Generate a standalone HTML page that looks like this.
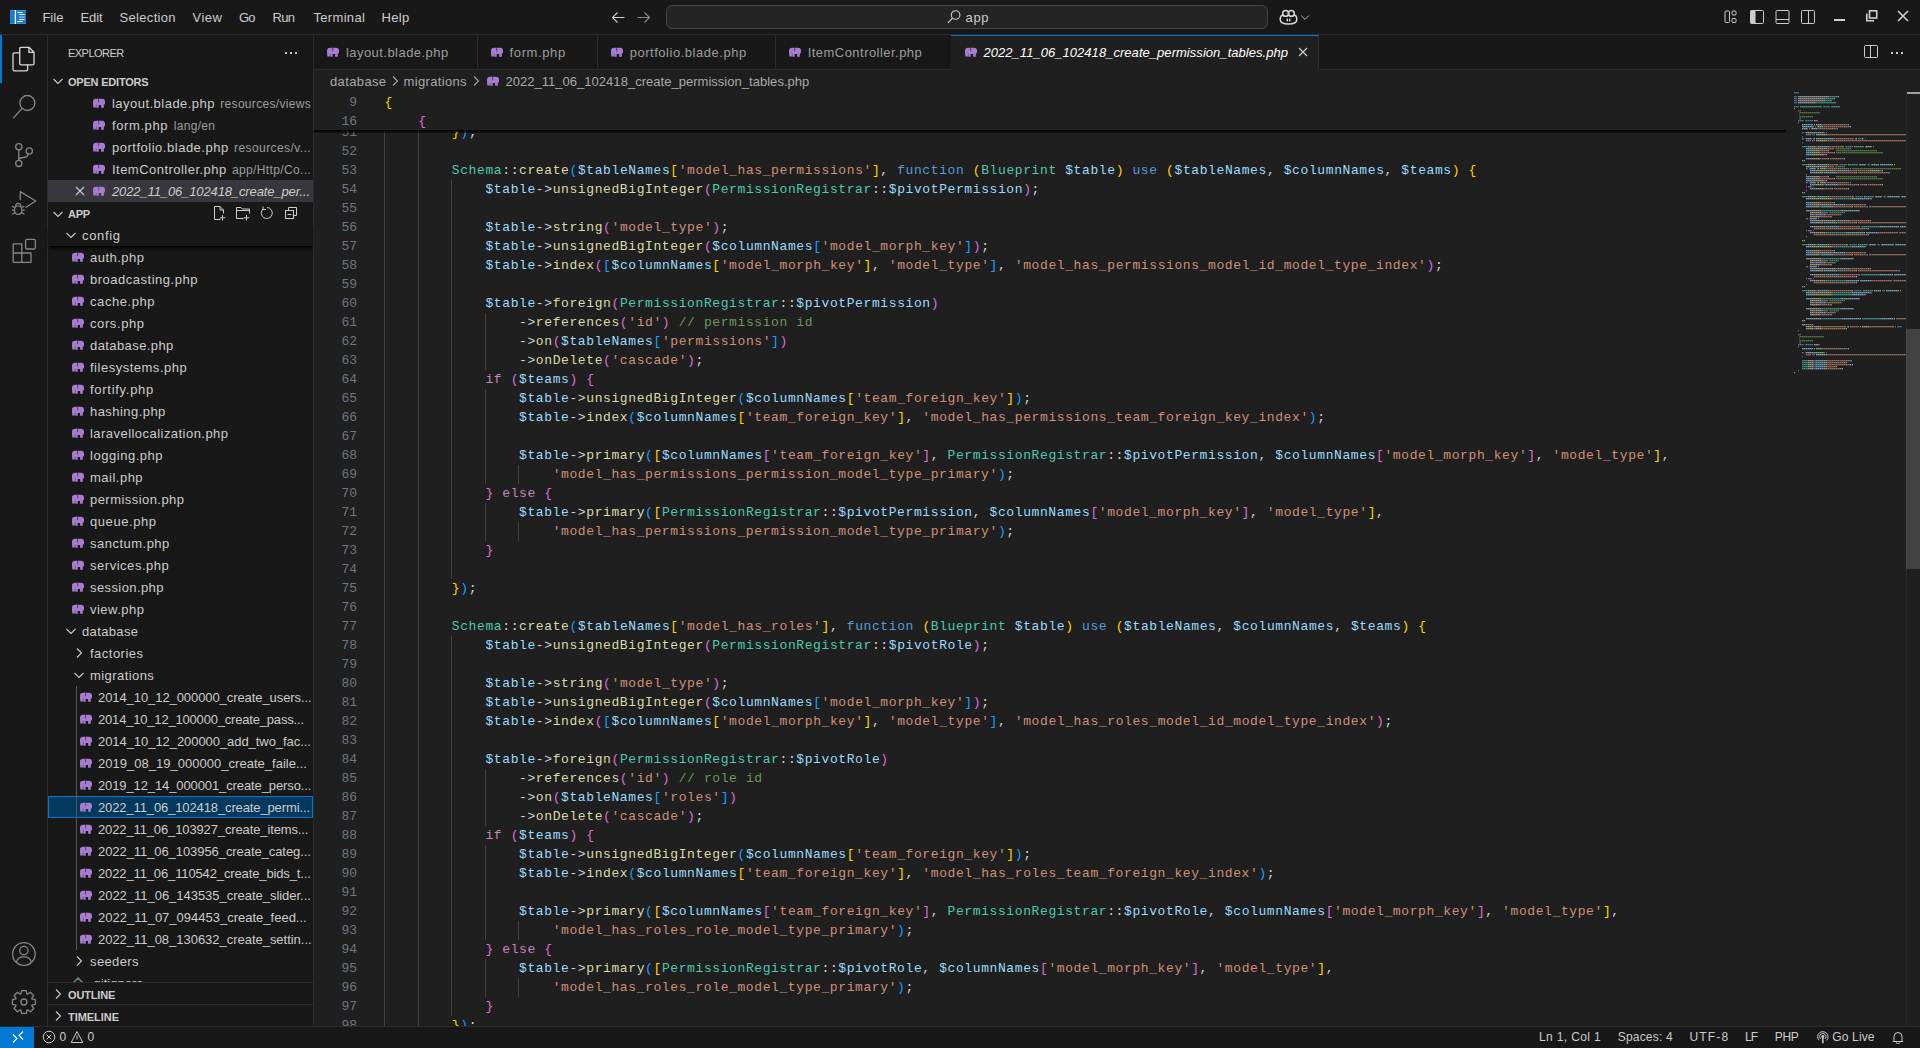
<!DOCTYPE html><html><head><meta charset="utf-8"><title>VS Code</title><style>
*{margin:0;padding:0;box-sizing:border-box}
html,body{width:1920px;height:1048px;overflow:hidden;background:#1F1F1F;font-family:"Liberation Sans",sans-serif;color:#CCCCCC}
.a{position:absolute}
.t{position:absolute;white-space:pre;font-size:13px;line-height:16px}
.ic{position:absolute}
.code{position:absolute;white-space:pre;font-family:"Liberation Mono",monospace;font-size:13px;letter-spacing:0.6px;line-height:19px;color:#D4D4D4}
.ln{position:absolute;white-space:pre;font-family:"Liberation Mono",monospace;font-size:13px;line-height:19px;color:#6E7681;text-align:right;width:60px}
.ig{position:absolute;width:1px;background:#404040}
</style></head><body>
<div class="a" style="left:0;top:0;width:1920px;height:35px;background:#181818;border-bottom:1px solid #2B2B2B"></div>
<svg class="ic" style="left:10px;top:10px" width="16" height="14" viewBox="0 0 16 14"><rect x="0" y="0" width="16" height="14" fill="#1B7CCC"/><rect x="0" y="0" width="16" height="0.8" fill="#3E93DA"/><rect x="0" y="13.2" width="16" height="0.8" fill="#3E93DA"/><rect x="4.8" y="0" width="1.2" height="14" fill="#F4F8FC"/><rect x="7.1" y="2" width="5.7" height="1.1" rx="0.5" fill="#EEF4FA"/><rect x="9" y="4" width="5.7" height="1.1" rx="0.5" fill="#EEF4FA"/><rect x="9" y="6.4" width="5.7" height="1.3" fill="#8FC0E8"/><rect x="9" y="8.9" width="5.7" height="1.1" rx="0.5" fill="#EEF4FA"/><rect x="7.1" y="11" width="5.7" height="1.1" rx="0.5" fill="#EEF4FA"/></svg>
<div class="t" style="left:42.4px;top:10px;font-size:13px;color:#CCCCCC;font-weight:normal;font-style:normal;letter-spacing:0.018px;">File</div>
<div class="t" style="left:80.5px;top:10px;font-size:13px;color:#CCCCCC;font-weight:normal;font-style:normal;letter-spacing:-0.067px;">Edit</div>
<div class="t" style="left:119.6px;top:10px;font-size:13px;color:#CCCCCC;font-weight:normal;font-style:normal;letter-spacing:0.303px;">Selection</div>
<div class="t" style="left:192.5px;top:10px;font-size:13px;color:#CCCCCC;font-weight:normal;font-style:normal;letter-spacing:0.486px;">View</div>
<div class="t" style="left:238.9px;top:10px;font-size:13px;color:#CCCCCC;font-weight:normal;font-style:normal;letter-spacing:-0.642px;">Go</div>
<div class="t" style="left:272.5px;top:10px;font-size:13px;color:#CCCCCC;font-weight:normal;font-style:normal;letter-spacing:-0.624px;">Run</div>
<div class="t" style="left:313.4px;top:10px;font-size:13px;color:#CCCCCC;font-weight:normal;font-style:normal;letter-spacing:0.339px;">Terminal</div>
<div class="t" style="left:381.6px;top:10px;font-size:13px;color:#CCCCCC;font-weight:normal;font-style:normal;letter-spacing:0.288px;">Help</div>
<svg class="ic" style="left:610px;top:10px" width="16" height="16" viewBox="0 0 16 16"><path d="M14.5 7.5 H2.5 M7.5 2.5 L2.5 7.5 L7.5 12.5" fill="none" stroke="#CCCCCC" stroke-width="1.1"/></svg>
<svg class="ic" style="left:636px;top:10px" width="16" height="16" viewBox="0 0 16 16"><path d="M1.5 7.5 H13.5 M8.5 2.5 L13.5 7.5 L8.5 12.5" fill="none" stroke="#8B8B8B" stroke-width="1.1"/></svg>
<div class="a" style="left:666px;top:5px;width:602px;height:24px;background:#242424;border:1px solid #454545;border-radius:6px"></div>
<svg class="ic" style="left:947px;top:10px" width="14" height="14" viewBox="0 0 14 14"><circle cx="8.6" cy="5" r="4.3" fill="none" stroke="#C8C8C8" stroke-width="1.1"/><path d="M5.6 8 L1 12.8" stroke="#C8C8C8" stroke-width="1.2"/></svg>
<div class="t" style="left:965.5px;top:10px;font-size:13px;color:#CCCCCC;font-weight:normal;font-style:normal;letter-spacing:0.655px;">app</div>
<svg class="ic" style="left:1279px;top:9px" width="19" height="16" viewBox="0 0 19 16"><path d="M1.2 10.5 C1.2 7 3 6 4.6 6 H14.4 C16 6 17.8 7 17.8 10.5 C17.8 14 14 15 9.5 15 C5 15 1.2 14 1.2 10.5 Z" fill="none" stroke="#D8D8D8" stroke-width="1.5"/><circle cx="6.6" cy="4.4" r="2.9" fill="#181818" stroke="#D8D8D8" stroke-width="1.5"/><circle cx="12.4" cy="4.4" r="2.9" fill="#181818" stroke="#D8D8D8" stroke-width="1.5"/><rect x="7.6" y="9.6" width="1.4" height="2.8" fill="#D8D8D8"/><rect x="10" y="9.6" width="1.4" height="2.8" fill="#D8D8D8"/></svg>
<svg class="ic" style="left:1299px;top:11px" width="12" height="12" viewBox="0 0 12 12"><path d="M2.2 4.6 L6 8.4 L9.8 4.6" fill="none" stroke="#BBBBBB" stroke-width="1"/></svg>
<svg class="ic" style="left:1724px;top:10px" width="16" height="16" viewBox="0 0 16 16"><rect x="1" y="1" width="4.5" height="11.5" rx="1" fill="none" stroke="#CCCCCC"/><rect x="8" y="1" width="4" height="4" rx="1" fill="none" stroke="#CCCCCC"/><rect x="8" y="8.5" width="4" height="4" rx="1" fill="none" stroke="#CCCCCC"/></svg>
<svg class="ic" style="left:1749px;top:10px" width="16" height="16" viewBox="0 0 16 16"><rect x="1.5" y="0.5" width="13" height="13" rx="1" fill="none" stroke="#CCCCCC"/><rect x="1.5" y="0.5" width="5" height="13" fill="#CCCCCC"/></svg>
<svg class="ic" style="left:1775px;top:10px" width="16" height="16" viewBox="0 0 16 16"><rect x="1" y="0.5" width="13" height="13" rx="1" fill="none" stroke="#CCCCCC"/><path d="M1 9.5 H14" stroke="#CCCCCC"/></svg>
<svg class="ic" style="left:1801px;top:10px" width="16" height="16" viewBox="0 0 16 16"><rect x="0.5" y="0.5" width="13" height="13" rx="1" fill="none" stroke="#CCCCCC"/><path d="M7.5 0.5 V13.5" stroke="#CCCCCC"/></svg>
<div class="a" style="left:1834px;top:19px;width:11px;height:2px;background:#D0D0D0"></div>
<svg class="ic" style="left:1866px;top:10px" width="12" height="12" viewBox="0 0 12 12"><rect x="3.5" y="0.8" width="7.2" height="7.2" fill="none" stroke="#D0D0D0" stroke-width="1.6"/><path d="M0.8 3.5 V10.8 H8" fill="none" stroke="#D0D0D0" stroke-width="1.6"/></svg>
<svg class="ic" style="left:1897px;top:10px" width="12" height="12" viewBox="0 0 12 12"><path d="M1 1 L11 11 M11 1 L1 11" stroke="#D0D0D0" stroke-width="1.6"/></svg>
<div class="a" style="left:0;top:35px;width:48px;height:991px;background:#181818;border-right:1px solid #2B2B2B"></div>
<div class="a" style="left:0;top:35px;width:2px;height:48px;background:#0078D4"></div>
<svg class="ic" style="left:0;top:35px" width="48" height="48" viewBox="0 0 48 48"><path d="M21 12.3 H29 L34 17.3 V28.6 Q34 29.9 32.7 29.9 H21 Q19.7 29.9 19.7 28.6 V13.6 Q19.7 12.3 21 12.3 Z M28.9 12.4 V17.4 H33.9" stroke="#D7D7D7" stroke-width="1.3" fill="none" stroke-linejoin="round" stroke-linecap="round"/><path d="M19.7 17.9 H14.3 Q13 17.9 13 19.2 V34.6 Q13 35.9 14.3 35.9 H26.3 Q27.6 35.9 27.6 34.6 V29.9" stroke="#D7D7D7" stroke-width="1.3" fill="none" stroke-linejoin="round" stroke-linecap="round"/></svg>
<svg class="ic" style="left:0;top:83px" width="48" height="48" viewBox="0 0 48 48"><circle cx="27.4" cy="20" r="7.5" stroke="#868686" stroke-width="1.3" fill="none" stroke-linejoin="round" stroke-linecap="round"/><path d="M22 25.6 L13.6 34.8" stroke="#868686" stroke-width="1.3" fill="none" stroke-linejoin="round" stroke-linecap="round"/></svg>
<svg class="ic" style="left:0;top:131px" width="48" height="48" viewBox="0 0 48 48"><circle cx="18.8" cy="15.7" r="3.1" stroke="#868686" stroke-width="1.3" fill="none" stroke-linejoin="round" stroke-linecap="round"/><circle cx="18.8" cy="32.4" r="3.1" stroke="#868686" stroke-width="1.3" fill="none" stroke-linejoin="round" stroke-linecap="round"/><circle cx="29.3" cy="20" r="3.1" stroke="#868686" stroke-width="1.3" fill="none" stroke-linejoin="round" stroke-linecap="round"/><path d="M18.8 18.8 V29.3 M28.3 23 Q27.2 26.4 23.5 26.5 Q19.4 26.6 18.8 29" stroke="#868686" stroke-width="1.3" fill="none" stroke-linejoin="round" stroke-linecap="round"/></svg>
<svg class="ic" style="left:0;top:179px" width="48" height="48" viewBox="0 0 48 48"><path d="M20.3 20.5 V12.6 L35.8 22 L26 28.3" stroke="#868686" stroke-width="1.3" fill="none" stroke-linejoin="round" stroke-linecap="round"/><path d="M15.6 27.2 Q15.8 24.4 18.2 24.4 Q20.6 24.4 20.8 27.2 M14.5 31 Q14.5 27 18.2 27 Q21.9 27 21.9 31 Q21.9 35.4 18.2 35.4 Q14.5 35.4 14.5 31 Z M12.4 27.4 L14.8 28.6 M12.2 31.2 H14.5 M12.4 35 L14.9 33.6 M24 27.4 L21.6 28.6 M24.2 31.2 H21.9 M24 35 L21.5 33.6" stroke="#868686" stroke-width="1.2" fill="none" stroke-linecap="round"/></svg>
<svg class="ic" style="left:0;top:227px" width="48" height="48" viewBox="0 0 48 48"><path d="M13.2 16.8 H21.8 V26 H31 V35.4 H13.2 Z M13.2 26 H21.8 V35.4" stroke="#868686" stroke-width="1.3" fill="none" stroke-linejoin="round" stroke-linecap="round"/><rect x="25.6" y="12.4" width="9.8" height="9.6" rx="1.6" stroke="#868686" stroke-width="1.3" fill="none" stroke-linejoin="round" stroke-linecap="round"/></svg>
<svg class="ic" style="left:0;top:930px" width="48" height="48" viewBox="0 0 48 48"><circle cx="23.9" cy="24" r="11.3" stroke="#868686" stroke-width="1.3" fill="none" stroke-linejoin="round" stroke-linecap="round"/><circle cx="23.9" cy="20.6" r="4.2" stroke="#868686" stroke-width="1.3" fill="none" stroke-linejoin="round" stroke-linecap="round"/><path d="M16.4 32.2 Q17.6 26.8 23.9 26.8 Q30.2 26.8 31.4 32.2" stroke="#868686" stroke-width="1.3" fill="none" stroke-linejoin="round" stroke-linecap="round"/></svg>
<svg class="ic" style="left:0;top:976px" width="48" height="48" viewBox="0 0 48 48"><polygon points="20.87,17.95 21.58,14.53 26.22,14.53 26.93,17.95 27.45,18.17 30.36,16.25 33.65,19.54 31.73,22.45 31.95,22.97 35.37,23.68 35.37,28.32 31.95,29.03 31.73,29.55 33.65,32.46 30.36,35.75 27.45,33.83 26.93,34.05 26.22,37.47 21.58,37.47 20.87,34.05 20.35,33.83 17.44,35.75 14.15,32.46 16.07,29.55 15.85,29.03 12.43,28.32 12.43,23.68 15.85,22.97 16.07,22.45 14.15,19.54 17.44,16.25 20.35,18.17" stroke="#868686" stroke-width="1.3" fill="none" stroke-linejoin="round" stroke-linecap="round"/><circle cx="23.9" cy="26" r="3" stroke="#868686" stroke-width="1.3" fill="none" stroke-linejoin="round" stroke-linecap="round"/></svg>
<div class="a" style="left:48px;top:35px;width:266px;height:991px;background:#181818;border-right:1px solid #2B2B2B"></div>
<div class="t" style="left:68px;top:44.5px;font-size:11px;color:#CCCCCC;font-weight:normal;font-style:normal;letter-spacing:-0.530px;">EXPLORER</div>
<div class="a" style="left:285px;top:52px;width:2px;height:2px;background:#CCCCCC;box-shadow:5px 0 #CCCCCC,10px 0 #CCCCCC"></div>
<svg class="ic" style="left:50px;top:73px" width="16" height="16" viewBox="0 0 16 16"><path d="M3.5 6 L8 10.5 L12.5 6" fill="none" stroke="#CCCCCC" stroke-width="1.1"/></svg>
<div class="t" style="left:68px;top:73.5px;font-size:11px;color:#CCCCCC;font-weight:bold;font-style:normal;letter-spacing:-0.202px;">OPEN EDITORS</div>
<svg class="ic" style="left:93px;top:98px" width="13" height="11" viewBox="0 0 13 11"><g transform="translate(0,0.8)"><path fill="#A77DD1" d="M0 3.2Q0 0 3 0L9 0Q12 0 12 3L12 4.4Q12 5.4 10.8 5.9L10.8 9L8.1 9L8.1 6.2L5.7 6.2L5.7 9L3.3 9L3.3 5.6L2.9 5.6L2.9 8.8L1 8.8Q0.2 8.8 0.2 7.6Z"/><path d="M5.7 0 V3.6" stroke="#181818" stroke-width="0.6"/></g></svg>
<div class="t" style="left:112px;top:96px;font-size:13px;color:#CCCCCC;font-weight:normal;font-style:normal;letter-spacing:0.473px;">layout.blade.php</div>
<div class="t" style="left:220.25px;top:96px;font-size:12px;color:#9D9D9D;font-weight:normal;font-style:normal;letter-spacing:0.319px;">resources/views</div>
<svg class="ic" style="left:93px;top:120px" width="13" height="11" viewBox="0 0 13 11"><g transform="translate(0,0.8)"><path fill="#A77DD1" d="M0 3.2Q0 0 3 0L9 0Q12 0 12 3L12 4.4Q12 5.4 10.8 5.9L10.8 9L8.1 9L8.1 6.2L5.7 6.2L5.7 9L3.3 9L3.3 5.6L2.9 5.6L2.9 8.8L1 8.8Q0.2 8.8 0.2 7.6Z"/><path d="M5.7 0 V3.6" stroke="#181818" stroke-width="0.6"/></g></svg>
<div class="t" style="left:112px;top:118px;font-size:13px;color:#CCCCCC;font-weight:normal;font-style:normal;letter-spacing:0.600px;">form.php</div>
<div class="t" style="left:173.75px;top:118px;font-size:12px;color:#9D9D9D;font-weight:normal;font-style:normal;letter-spacing:0.305px;">lang/en</div>
<svg class="ic" style="left:93px;top:142px" width="13" height="11" viewBox="0 0 13 11"><g transform="translate(0,0.8)"><path fill="#A77DD1" d="M0 3.2Q0 0 3 0L9 0Q12 0 12 3L12 4.4Q12 5.4 10.8 5.9L10.8 9L8.1 9L8.1 6.2L5.7 6.2L5.7 9L3.3 9L3.3 5.6L2.9 5.6L2.9 8.8L1 8.8Q0.2 8.8 0.2 7.6Z"/><path d="M5.7 0 V3.6" stroke="#181818" stroke-width="0.6"/></g></svg>
<div class="t" style="left:112px;top:140px;font-size:13px;color:#CCCCCC;font-weight:normal;font-style:normal;letter-spacing:0.513px;">portfolio.blade.php</div>
<div class="t" style="left:234.0px;top:140px;font-size:12px;color:#9D9D9D;font-weight:normal;font-style:normal;letter-spacing:0.428px;">resources/v...</div>
<svg class="ic" style="left:93px;top:164px" width="13" height="11" viewBox="0 0 13 11"><g transform="translate(0,0.8)"><path fill="#A77DD1" d="M0 3.2Q0 0 3 0L9 0Q12 0 12 3L12 4.4Q12 5.4 10.8 5.9L10.8 9L8.1 9L8.1 6.2L5.7 6.2L5.7 9L3.3 9L3.3 5.6L2.9 5.6L2.9 8.8L1 8.8Q0.2 8.8 0.2 7.6Z"/><path d="M5.7 0 V3.6" stroke="#181818" stroke-width="0.6"/></g></svg>
<div class="t" style="left:112px;top:162px;font-size:13px;color:#CCCCCC;font-weight:normal;font-style:normal;letter-spacing:0.469px;">ItemController.php</div>
<div class="t" style="left:232.0px;top:162px;font-size:12px;color:#9D9D9D;font-weight:normal;font-style:normal;letter-spacing:0.359px;">app/Http/Co...</div>
<div class="a" style="left:48px;top:180px;width:265px;height:22px;background:#37373D"></div>
<svg class="ic" style="left:74px;top:185px" width="12" height="12" viewBox="0 0 12 12"><path d="M2 2 L10 10 M10 2 L2 10" stroke="#CCCCCC" stroke-width="1.1"/></svg>
<svg class="ic" style="left:93px;top:186px" width="13" height="11" viewBox="0 0 13 11"><g transform="translate(0,0.8)"><path fill="#A77DD1" d="M0 3.2Q0 0 3 0L9 0Q12 0 12 3L12 4.4Q12 5.4 10.8 5.9L10.8 9L8.1 9L8.1 6.2L5.7 6.2L5.7 9L3.3 9L3.3 5.6L2.9 5.6L2.9 8.8L1 8.8Q0.2 8.8 0.2 7.6Z"/><path d="M5.7 0 V3.6" stroke="#37373D" stroke-width="0.6"/></g></svg>
<div class="t" style="left:112px;top:184px;font-size:13px;color:#CCCCCC;font-weight:normal;font-style:italic;letter-spacing:-0.123px;">2022_11_06_102418_create_per...</div>
<svg class="ic" style="left:50px;top:206px" width="16" height="16" viewBox="0 0 16 16"><path d="M3.5 6 L8 10.5 L12.5 6" fill="none" stroke="#CCCCCC" stroke-width="1.1"/></svg>
<div class="t" style="left:68px;top:206px;font-size:11px;color:#CCCCCC;font-weight:bold;font-style:normal;letter-spacing:-0.309px;">APP</div>
<svg class="ic" style="left:211px;top:205px" width="16" height="16" viewBox="0 0 16 16"><path d="M9.5 14.5 H3.5 V1.5 H9 L12.5 5 V8.5 M9 1.5 V5 H12.5 M11.5 10 V15.5 M8.7 12.8 H14.3" fill="none" stroke="#CCCCCC" stroke-width="1"/></svg>
<svg class="ic" style="left:235px;top:205px" width="16" height="16" viewBox="0 0 16 16"><path d="M8.5 13.5 H1.5 V2.5 H6 L7.5 4 H14.5 V8.5 M1.5 5.5 H14.5 M11.5 10 V15.5 M8.7 12.8 H14.3" fill="none" stroke="#CCCCCC" stroke-width="1"/></svg>
<svg class="ic" style="left:259px;top:205px" width="16" height="16" viewBox="0 0 16 16"><path d="M4 4 A5.5 5.5 0 1 0 8 2.5 M4 1.5 V4.5 H7" fill="none" stroke="#CCCCCC" stroke-width="1"/></svg>
<svg class="ic" style="left:283px;top:205px" width="16" height="16" viewBox="0 0 16 16"><rect x="2.5" y="5.5" width="8" height="8" fill="none" stroke="#CCCCCC"/><path d="M5.5 5.5 V2.5 H13.5 V10.5 H10.5 M4.5 9.5 H8.5" fill="none" stroke="#CCCCCC"/></svg>
<div class="a" style="left:48px;top:224px;width:265px;height:758px;overflow:hidden">
<svg class="ic" style="left:24px;top:28px" width="13" height="11" viewBox="0 0 13 11"><g transform="translate(0,0.8)"><path fill="#A77DD1" d="M0 3.2Q0 0 3 0L9 0Q12 0 12 3L12 4.4Q12 5.4 10.8 5.9L10.8 9L8.1 9L8.1 6.2L5.7 6.2L5.7 9L3.3 9L3.3 5.6L2.9 5.6L2.9 8.8L1 8.8Q0.2 8.8 0.2 7.6Z"/><path d="M5.7 0 V3.6" stroke="#181818" stroke-width="0.6"/></g></svg>
<div class="t" style="left:42px;top:26px;font-size:13px;color:#CCCCCC;font-weight:normal;font-style:normal;letter-spacing:0.485px;">auth.php</div>
<svg class="ic" style="left:24px;top:50px" width="13" height="11" viewBox="0 0 13 11"><g transform="translate(0,0.8)"><path fill="#A77DD1" d="M0 3.2Q0 0 3 0L9 0Q12 0 12 3L12 4.4Q12 5.4 10.8 5.9L10.8 9L8.1 9L8.1 6.2L5.7 6.2L5.7 9L3.3 9L3.3 5.6L2.9 5.6L2.9 8.8L1 8.8Q0.2 8.8 0.2 7.6Z"/><path d="M5.7 0 V3.6" stroke="#181818" stroke-width="0.6"/></g></svg>
<div class="t" style="left:42px;top:48px;font-size:13px;color:#CCCCCC;font-weight:normal;font-style:normal;letter-spacing:0.511px;">broadcasting.php</div>
<svg class="ic" style="left:24px;top:72px" width="13" height="11" viewBox="0 0 13 11"><g transform="translate(0,0.8)"><path fill="#A77DD1" d="M0 3.2Q0 0 3 0L9 0Q12 0 12 3L12 4.4Q12 5.4 10.8 5.9L10.8 9L8.1 9L8.1 6.2L5.7 6.2L5.7 9L3.3 9L3.3 5.6L2.9 5.6L2.9 8.8L1 8.8Q0.2 8.8 0.2 7.6Z"/><path d="M5.7 0 V3.6" stroke="#181818" stroke-width="0.6"/></g></svg>
<div class="t" style="left:42px;top:70px;font-size:13px;color:#CCCCCC;font-weight:normal;font-style:normal;letter-spacing:0.576px;">cache.php</div>
<svg class="ic" style="left:24px;top:94px" width="13" height="11" viewBox="0 0 13 11"><g transform="translate(0,0.8)"><path fill="#A77DD1" d="M0 3.2Q0 0 3 0L9 0Q12 0 12 3L12 4.4Q12 5.4 10.8 5.9L10.8 9L8.1 9L8.1 6.2L5.7 6.2L5.7 9L3.3 9L3.3 5.6L2.9 5.6L2.9 8.8L1 8.8Q0.2 8.8 0.2 7.6Z"/><path d="M5.7 0 V3.6" stroke="#181818" stroke-width="0.6"/></g></svg>
<div class="t" style="left:42px;top:92px;font-size:13px;color:#CCCCCC;font-weight:normal;font-style:normal;letter-spacing:0.591px;">cors.php</div>
<svg class="ic" style="left:24px;top:116px" width="13" height="11" viewBox="0 0 13 11"><g transform="translate(0,0.8)"><path fill="#A77DD1" d="M0 3.2Q0 0 3 0L9 0Q12 0 12 3L12 4.4Q12 5.4 10.8 5.9L10.8 9L8.1 9L8.1 6.2L5.7 6.2L5.7 9L3.3 9L3.3 5.6L2.9 5.6L2.9 8.8L1 8.8Q0.2 8.8 0.2 7.6Z"/><path d="M5.7 0 V3.6" stroke="#181818" stroke-width="0.6"/></g></svg>
<div class="t" style="left:42px;top:114px;font-size:13px;color:#CCCCCC;font-weight:normal;font-style:normal;letter-spacing:0.410px;">database.php</div>
<svg class="ic" style="left:24px;top:138px" width="13" height="11" viewBox="0 0 13 11"><g transform="translate(0,0.8)"><path fill="#A77DD1" d="M0 3.2Q0 0 3 0L9 0Q12 0 12 3L12 4.4Q12 5.4 10.8 5.9L10.8 9L8.1 9L8.1 6.2L5.7 6.2L5.7 9L3.3 9L3.3 5.6L2.9 5.6L2.9 8.8L1 8.8Q0.2 8.8 0.2 7.6Z"/><path d="M5.7 0 V3.6" stroke="#181818" stroke-width="0.6"/></g></svg>
<div class="t" style="left:42px;top:136px;font-size:13px;color:#CCCCCC;font-weight:normal;font-style:normal;letter-spacing:0.508px;">filesystems.php</div>
<svg class="ic" style="left:24px;top:160px" width="13" height="11" viewBox="0 0 13 11"><g transform="translate(0,0.8)"><path fill="#A77DD1" d="M0 3.2Q0 0 3 0L9 0Q12 0 12 3L12 4.4Q12 5.4 10.8 5.9L10.8 9L8.1 9L8.1 6.2L5.7 6.2L5.7 9L3.3 9L3.3 5.6L2.9 5.6L2.9 8.8L1 8.8Q0.2 8.8 0.2 7.6Z"/><path d="M5.7 0 V3.6" stroke="#181818" stroke-width="0.6"/></g></svg>
<div class="t" style="left:42px;top:158px;font-size:13px;color:#CCCCCC;font-weight:normal;font-style:normal;letter-spacing:0.718px;">fortify.php</div>
<svg class="ic" style="left:24px;top:182px" width="13" height="11" viewBox="0 0 13 11"><g transform="translate(0,0.8)"><path fill="#A77DD1" d="M0 3.2Q0 0 3 0L9 0Q12 0 12 3L12 4.4Q12 5.4 10.8 5.9L10.8 9L8.1 9L8.1 6.2L5.7 6.2L5.7 9L3.3 9L3.3 5.6L2.9 5.6L2.9 8.8L1 8.8Q0.2 8.8 0.2 7.6Z"/><path d="M5.7 0 V3.6" stroke="#181818" stroke-width="0.6"/></g></svg>
<div class="t" style="left:42px;top:180px;font-size:13px;color:#CCCCCC;font-weight:normal;font-style:normal;letter-spacing:0.446px;">hashing.php</div>
<svg class="ic" style="left:24px;top:204px" width="13" height="11" viewBox="0 0 13 11"><g transform="translate(0,0.8)"><path fill="#A77DD1" d="M0 3.2Q0 0 3 0L9 0Q12 0 12 3L12 4.4Q12 5.4 10.8 5.9L10.8 9L8.1 9L8.1 6.2L5.7 6.2L5.7 9L3.3 9L3.3 5.6L2.9 5.6L2.9 8.8L1 8.8Q0.2 8.8 0.2 7.6Z"/><path d="M5.7 0 V3.6" stroke="#181818" stroke-width="0.6"/></g></svg>
<div class="t" style="left:42px;top:202px;font-size:13px;color:#CCCCCC;font-weight:normal;font-style:normal;letter-spacing:0.459px;">laravellocalization.php</div>
<svg class="ic" style="left:24px;top:226px" width="13" height="11" viewBox="0 0 13 11"><g transform="translate(0,0.8)"><path fill="#A77DD1" d="M0 3.2Q0 0 3 0L9 0Q12 0 12 3L12 4.4Q12 5.4 10.8 5.9L10.8 9L8.1 9L8.1 6.2L5.7 6.2L5.7 9L3.3 9L3.3 5.6L2.9 5.6L2.9 8.8L1 8.8Q0.2 8.8 0.2 7.6Z"/><path d="M5.7 0 V3.6" stroke="#181818" stroke-width="0.6"/></g></svg>
<div class="t" style="left:42px;top:224px;font-size:13px;color:#CCCCCC;font-weight:normal;font-style:normal;letter-spacing:0.537px;">logging.php</div>
<svg class="ic" style="left:24px;top:248px" width="13" height="11" viewBox="0 0 13 11"><g transform="translate(0,0.8)"><path fill="#A77DD1" d="M0 3.2Q0 0 3 0L9 0Q12 0 12 3L12 4.4Q12 5.4 10.8 5.9L10.8 9L8.1 9L8.1 6.2L5.7 6.2L5.7 9L3.3 9L3.3 5.6L2.9 5.6L2.9 8.8L1 8.8Q0.2 8.8 0.2 7.6Z"/><path d="M5.7 0 V3.6" stroke="#181818" stroke-width="0.6"/></g></svg>
<div class="t" style="left:42px;top:246px;font-size:13px;color:#CCCCCC;font-weight:normal;font-style:normal;letter-spacing:0.495px;">mail.php</div>
<svg class="ic" style="left:24px;top:270px" width="13" height="11" viewBox="0 0 13 11"><g transform="translate(0,0.8)"><path fill="#A77DD1" d="M0 3.2Q0 0 3 0L9 0Q12 0 12 3L12 4.4Q12 5.4 10.8 5.9L10.8 9L8.1 9L8.1 6.2L5.7 6.2L5.7 9L3.3 9L3.3 5.6L2.9 5.6L2.9 8.8L1 8.8Q0.2 8.8 0.2 7.6Z"/><path d="M5.7 0 V3.6" stroke="#181818" stroke-width="0.6"/></g></svg>
<div class="t" style="left:42px;top:268px;font-size:13px;color:#CCCCCC;font-weight:normal;font-style:normal;letter-spacing:0.450px;">permission.php</div>
<svg class="ic" style="left:24px;top:292px" width="13" height="11" viewBox="0 0 13 11"><g transform="translate(0,0.8)"><path fill="#A77DD1" d="M0 3.2Q0 0 3 0L9 0Q12 0 12 3L12 4.4Q12 5.4 10.8 5.9L10.8 9L8.1 9L8.1 6.2L5.7 6.2L5.7 9L3.3 9L3.3 5.6L2.9 5.6L2.9 8.8L1 8.8Q0.2 8.8 0.2 7.6Z"/><path d="M5.7 0 V3.6" stroke="#181818" stroke-width="0.6"/></g></svg>
<div class="t" style="left:42px;top:290px;font-size:13px;color:#CCCCCC;font-weight:normal;font-style:normal;letter-spacing:0.569px;">queue.php</div>
<svg class="ic" style="left:24px;top:314px" width="13" height="11" viewBox="0 0 13 11"><g transform="translate(0,0.8)"><path fill="#A77DD1" d="M0 3.2Q0 0 3 0L9 0Q12 0 12 3L12 4.4Q12 5.4 10.8 5.9L10.8 9L8.1 9L8.1 6.2L5.7 6.2L5.7 9L3.3 9L3.3 5.6L2.9 5.6L2.9 8.8L1 8.8Q0.2 8.8 0.2 7.6Z"/><path d="M5.7 0 V3.6" stroke="#181818" stroke-width="0.6"/></g></svg>
<div class="t" style="left:42px;top:312px;font-size:13px;color:#CCCCCC;font-weight:normal;font-style:normal;letter-spacing:0.487px;">sanctum.php</div>
<svg class="ic" style="left:24px;top:336px" width="13" height="11" viewBox="0 0 13 11"><g transform="translate(0,0.8)"><path fill="#A77DD1" d="M0 3.2Q0 0 3 0L9 0Q12 0 12 3L12 4.4Q12 5.4 10.8 5.9L10.8 9L8.1 9L8.1 6.2L5.7 6.2L5.7 9L3.3 9L3.3 5.6L2.9 5.6L2.9 8.8L1 8.8Q0.2 8.8 0.2 7.6Z"/><path d="M5.7 0 V3.6" stroke="#181818" stroke-width="0.6"/></g></svg>
<div class="t" style="left:42px;top:334px;font-size:13px;color:#CCCCCC;font-weight:normal;font-style:normal;letter-spacing:0.529px;">services.php</div>
<svg class="ic" style="left:24px;top:358px" width="13" height="11" viewBox="0 0 13 11"><g transform="translate(0,0.8)"><path fill="#A77DD1" d="M0 3.2Q0 0 3 0L9 0Q12 0 12 3L12 4.4Q12 5.4 10.8 5.9L10.8 9L8.1 9L8.1 6.2L5.7 6.2L5.7 9L3.3 9L3.3 5.6L2.9 5.6L2.9 8.8L1 8.8Q0.2 8.8 0.2 7.6Z"/><path d="M5.7 0 V3.6" stroke="#181818" stroke-width="0.6"/></g></svg>
<div class="t" style="left:42px;top:356px;font-size:13px;color:#CCCCCC;font-weight:normal;font-style:normal;letter-spacing:0.402px;">session.php</div>
<svg class="ic" style="left:24px;top:380px" width="13" height="11" viewBox="0 0 13 11"><g transform="translate(0,0.8)"><path fill="#A77DD1" d="M0 3.2Q0 0 3 0L9 0Q12 0 12 3L12 4.4Q12 5.4 10.8 5.9L10.8 9L8.1 9L8.1 6.2L5.7 6.2L5.7 9L3.3 9L3.3 5.6L2.9 5.6L2.9 8.8L1 8.8Q0.2 8.8 0.2 7.6Z"/><path d="M5.7 0 V3.6" stroke="#181818" stroke-width="0.6"/></g></svg>
<div class="t" style="left:42px;top:378px;font-size:13px;color:#CCCCCC;font-weight:normal;font-style:normal;letter-spacing:0.487px;">view.php</div>
<svg class="ic" style="left:15px;top:399px" width="16" height="16" viewBox="0 0 16 16"><path d="M3.5 6 L8 10.5 L12.5 6" fill="none" stroke="#CCCCCC" stroke-width="1.1"/></svg>
<div class="t" style="left:34px;top:400px;font-size:13px;color:#CCCCCC;font-weight:normal;font-style:normal;letter-spacing:0.358px;">database</div>
<svg class="ic" style="left:23px;top:421px" width="16" height="16" viewBox="0 0 16 16"><path d="M6 3.5 L10.5 8 L6 12.5" fill="none" stroke="#CCCCCC" stroke-width="1.1"/></svg>
<div class="t" style="left:42px;top:422px;font-size:13px;color:#CCCCCC;font-weight:normal;font-style:normal;letter-spacing:0.484px;">factories</div>
<svg class="ic" style="left:23px;top:443px" width="16" height="16" viewBox="0 0 16 16"><path d="M3.5 6 L8 10.5 L12.5 6" fill="none" stroke="#CCCCCC" stroke-width="1.1"/></svg>
<div class="t" style="left:42px;top:444px;font-size:13px;color:#CCCCCC;font-weight:normal;font-style:normal;letter-spacing:0.426px;">migrations</div>
<svg class="ic" style="left:32px;top:468px" width="13" height="11" viewBox="0 0 13 11"><g transform="translate(0,0.8)"><path fill="#A77DD1" d="M0 3.2Q0 0 3 0L9 0Q12 0 12 3L12 4.4Q12 5.4 10.8 5.9L10.8 9L8.1 9L8.1 6.2L5.7 6.2L5.7 9L3.3 9L3.3 5.6L2.9 5.6L2.9 8.8L1 8.8Q0.2 8.8 0.2 7.6Z"/><path d="M5.7 0 V3.6" stroke="#181818" stroke-width="0.6"/></g></svg>
<div class="t" style="left:50px;top:466px;font-size:13px;color:#CCCCCC;font-weight:normal;font-style:normal;letter-spacing:-0.076px;">2014_10_12_000000_create_users...</div>
<svg class="ic" style="left:32px;top:490px" width="13" height="11" viewBox="0 0 13 11"><g transform="translate(0,0.8)"><path fill="#A77DD1" d="M0 3.2Q0 0 3 0L9 0Q12 0 12 3L12 4.4Q12 5.4 10.8 5.9L10.8 9L8.1 9L8.1 6.2L5.7 6.2L5.7 9L3.3 9L3.3 5.6L2.9 5.6L2.9 8.8L1 8.8Q0.2 8.8 0.2 7.6Z"/><path d="M5.7 0 V3.6" stroke="#181818" stroke-width="0.6"/></g></svg>
<div class="t" style="left:50px;top:488px;font-size:13px;color:#CCCCCC;font-weight:normal;font-style:normal;letter-spacing:-0.187px;">2014_10_12_100000_create_pass...</div>
<svg class="ic" style="left:32px;top:512px" width="13" height="11" viewBox="0 0 13 11"><g transform="translate(0,0.8)"><path fill="#A77DD1" d="M0 3.2Q0 0 3 0L9 0Q12 0 12 3L12 4.4Q12 5.4 10.8 5.9L10.8 9L8.1 9L8.1 6.2L5.7 6.2L5.7 9L3.3 9L3.3 5.6L2.9 5.6L2.9 8.8L1 8.8Q0.2 8.8 0.2 7.6Z"/><path d="M5.7 0 V3.6" stroke="#181818" stroke-width="0.6"/></g></svg>
<div class="t" style="left:50px;top:510px;font-size:13px;color:#CCCCCC;font-weight:normal;font-style:normal;letter-spacing:-0.058px;">2014_10_12_200000_add_two_fac...</div>
<svg class="ic" style="left:32px;top:534px" width="13" height="11" viewBox="0 0 13 11"><g transform="translate(0,0.8)"><path fill="#A77DD1" d="M0 3.2Q0 0 3 0L9 0Q12 0 12 3L12 4.4Q12 5.4 10.8 5.9L10.8 9L8.1 9L8.1 6.2L5.7 6.2L5.7 9L3.3 9L3.3 5.6L2.9 5.6L2.9 8.8L1 8.8Q0.2 8.8 0.2 7.6Z"/><path d="M5.7 0 V3.6" stroke="#181818" stroke-width="0.6"/></g></svg>
<div class="t" style="left:50px;top:532px;font-size:13px;color:#CCCCCC;font-weight:normal;font-style:normal;letter-spacing:0.022px;">2019_08_19_000000_create_faile...</div>
<svg class="ic" style="left:32px;top:556px" width="13" height="11" viewBox="0 0 13 11"><g transform="translate(0,0.8)"><path fill="#A77DD1" d="M0 3.2Q0 0 3 0L9 0Q12 0 12 3L12 4.4Q12 5.4 10.8 5.9L10.8 9L8.1 9L8.1 6.2L5.7 6.2L5.7 9L3.3 9L3.3 5.6L2.9 5.6L2.9 8.8L1 8.8Q0.2 8.8 0.2 7.6Z"/><path d="M5.7 0 V3.6" stroke="#181818" stroke-width="0.6"/></g></svg>
<div class="t" style="left:50px;top:554px;font-size:13px;color:#CCCCCC;font-weight:normal;font-style:normal;letter-spacing:-0.108px;">2019_12_14_000001_create_perso...</div>
<div class="a" style="left:0;top:572px;width:265px;height:22px;background:#04395E;border:1px solid #0078D4"></div>
<svg class="ic" style="left:32px;top:578px" width="13" height="11" viewBox="0 0 13 11"><g transform="translate(0,0.8)"><path fill="#A77DD1" d="M0 3.2Q0 0 3 0L9 0Q12 0 12 3L12 4.4Q12 5.4 10.8 5.9L10.8 9L8.1 9L8.1 6.2L5.7 6.2L5.7 9L3.3 9L3.3 5.6L2.9 5.6L2.9 8.8L1 8.8Q0.2 8.8 0.2 7.6Z"/><path d="M5.7 0 V3.6" stroke="#04395E" stroke-width="0.6"/></g></svg>
<div class="t" style="left:50px;top:576px;font-size:13px;color:#CCCCCC;font-weight:normal;font-style:normal;letter-spacing:-0.121px;">2022_11_06_102418_create_permi...</div>
<svg class="ic" style="left:32px;top:600px" width="13" height="11" viewBox="0 0 13 11"><g transform="translate(0,0.8)"><path fill="#A77DD1" d="M0 3.2Q0 0 3 0L9 0Q12 0 12 3L12 4.4Q12 5.4 10.8 5.9L10.8 9L8.1 9L8.1 6.2L5.7 6.2L5.7 9L3.3 9L3.3 5.6L2.9 5.6L2.9 8.8L1 8.8Q0.2 8.8 0.2 7.6Z"/><path d="M5.7 0 V3.6" stroke="#181818" stroke-width="0.6"/></g></svg>
<div class="t" style="left:50px;top:598px;font-size:13px;color:#CCCCCC;font-weight:normal;font-style:normal;letter-spacing:-0.126px;">2022_11_06_103927_create_items...</div>
<svg class="ic" style="left:32px;top:622px" width="13" height="11" viewBox="0 0 13 11"><g transform="translate(0,0.8)"><path fill="#A77DD1" d="M0 3.2Q0 0 3 0L9 0Q12 0 12 3L12 4.4Q12 5.4 10.8 5.9L10.8 9L8.1 9L8.1 6.2L5.7 6.2L5.7 9L3.3 9L3.3 5.6L2.9 5.6L2.9 8.8L1 8.8Q0.2 8.8 0.2 7.6Z"/><path d="M5.7 0 V3.6" stroke="#181818" stroke-width="0.6"/></g></svg>
<div class="t" style="left:50px;top:620px;font-size:13px;color:#CCCCCC;font-weight:normal;font-style:normal;letter-spacing:-0.071px;">2022_11_06_103956_create_categ...</div>
<svg class="ic" style="left:32px;top:644px" width="13" height="11" viewBox="0 0 13 11"><g transform="translate(0,0.8)"><path fill="#A77DD1" d="M0 3.2Q0 0 3 0L9 0Q12 0 12 3L12 4.4Q12 5.4 10.8 5.9L10.8 9L8.1 9L8.1 6.2L5.7 6.2L5.7 9L3.3 9L3.3 5.6L2.9 5.6L2.9 8.8L1 8.8Q0.2 8.8 0.2 7.6Z"/><path d="M5.7 0 V3.6" stroke="#181818" stroke-width="0.6"/></g></svg>
<div class="t" style="left:50px;top:642px;font-size:13px;color:#CCCCCC;font-weight:normal;font-style:normal;letter-spacing:-0.127px;">2022_11_06_110542_create_bids_t...</div>
<svg class="ic" style="left:32px;top:666px" width="13" height="11" viewBox="0 0 13 11"><g transform="translate(0,0.8)"><path fill="#A77DD1" d="M0 3.2Q0 0 3 0L9 0Q12 0 12 3L12 4.4Q12 5.4 10.8 5.9L10.8 9L8.1 9L8.1 6.2L5.7 6.2L5.7 9L3.3 9L3.3 5.6L2.9 5.6L2.9 8.8L1 8.8Q0.2 8.8 0.2 7.6Z"/><path d="M5.7 0 V3.6" stroke="#181818" stroke-width="0.6"/></g></svg>
<div class="t" style="left:50px;top:664px;font-size:13px;color:#CCCCCC;font-weight:normal;font-style:normal;letter-spacing:-0.025px;">2022_11_06_143535_create_slider...</div>
<svg class="ic" style="left:32px;top:688px" width="13" height="11" viewBox="0 0 13 11"><g transform="translate(0,0.8)"><path fill="#A77DD1" d="M0 3.2Q0 0 3 0L9 0Q12 0 12 3L12 4.4Q12 5.4 10.8 5.9L10.8 9L8.1 9L8.1 6.2L5.7 6.2L5.7 9L3.3 9L3.3 5.6L2.9 5.6L2.9 8.8L1 8.8Q0.2 8.8 0.2 7.6Z"/><path d="M5.7 0 V3.6" stroke="#181818" stroke-width="0.6"/></g></svg>
<div class="t" style="left:50px;top:686px;font-size:13px;color:#CCCCCC;font-weight:normal;font-style:normal;letter-spacing:0.001px;">2022_11_07_094453_create_feed...</div>
<svg class="ic" style="left:32px;top:710px" width="13" height="11" viewBox="0 0 13 11"><g transform="translate(0,0.8)"><path fill="#A77DD1" d="M0 3.2Q0 0 3 0L9 0Q12 0 12 3L12 4.4Q12 5.4 10.8 5.9L10.8 9L8.1 9L8.1 6.2L5.7 6.2L5.7 9L3.3 9L3.3 5.6L2.9 5.6L2.9 8.8L1 8.8Q0.2 8.8 0.2 7.6Z"/><path d="M5.7 0 V3.6" stroke="#181818" stroke-width="0.6"/></g></svg>
<div class="t" style="left:50px;top:708px;font-size:13px;color:#CCCCCC;font-weight:normal;font-style:normal;letter-spacing:-0.026px;">2022_11_08_130632_create_settin...</div>
<div class="ig" style="left:28px;top:462px;height:264px;background:#585858"></div>
<svg class="ic" style="left:23px;top:729px" width="16" height="16" viewBox="0 0 16 16"><path d="M6 3.5 L10.5 8 L6 12.5" fill="none" stroke="#CCCCCC" stroke-width="1.1"/></svg>
<div class="t" style="left:42px;top:730px;font-size:13px;color:#CCCCCC;font-weight:normal;font-style:normal;letter-spacing:0.375px;">seeders</div>
<svg class="ic" style="left:24px;top:753px" width="12" height="12" viewBox="0 0 12 12"><path d="M6 1 L11 6 L6 11 L1 6 Z" fill="none" stroke="#6D8086" stroke-width="1.5"/></svg>
<div class="t" style="left:42px;top:752px;font-size:13px;color:#CCCCCC;font-weight:normal;font-style:normal;">.gitignore</div>
</div>
<div class="a" style="left:48px;top:224px;width:265px;height:22px;background:#181818;box-shadow:0 3px 3px -1px #000"></div>
<svg class="ic" style="left:63px;top:227px" width="16" height="16" viewBox="0 0 16 16"><path d="M3.5 6 L8 10.5 L12.5 6" fill="none" stroke="#CCCCCC" stroke-width="1.1"/></svg>
<div class="t" style="left:82px;top:228px;font-size:13px;color:#CCCCCC;font-weight:normal;font-style:normal;letter-spacing:0.662px;">config</div>
<div class="a" style="left:48px;top:982px;width:265px;height:1px;background:#2B2B2B"></div>
<svg class="ic" style="left:50px;top:986px" width="16" height="16" viewBox="0 0 16 16"><path d="M6 3.5 L10.5 8 L6 12.5" fill="none" stroke="#CCCCCC" stroke-width="1.1"/></svg>
<div class="t" style="left:68px;top:986.5px;font-size:11px;color:#CCCCCC;font-weight:bold;font-style:normal;letter-spacing:-0.163px;">OUTLINE</div>
<div class="a" style="left:48px;top:1004px;width:265px;height:1px;background:#2B2B2B"></div>
<svg class="ic" style="left:50px;top:1008px" width="16" height="16" viewBox="0 0 16 16"><path d="M6 3.5 L10.5 8 L6 12.5" fill="none" stroke="#CCCCCC" stroke-width="1.1"/></svg>
<div class="t" style="left:68px;top:1008.5px;font-size:11px;color:#CCCCCC;font-weight:bold;font-style:normal;letter-spacing:-0.047px;">TIMELINE</div>
<div class="a" style="left:314px;top:35px;width:1606px;height:35px;background:#181818;border-bottom:1px solid #2B2B2B"></div>
<div class="a" style="left:314px;top:35px;width:164px;height:35px;border-right:1px solid #2B2B2B;border-bottom:1px solid #2B2B2B"></div>
<svg class="ic" style="left:327.4px;top:47px" width="13" height="11" viewBox="0 0 13 11"><g transform="translate(0,0.8)"><path fill="#A77DD1" d="M0 3.2Q0 0 3 0L9 0Q12 0 12 3L12 4.4Q12 5.4 10.8 5.9L10.8 9L8.1 9L8.1 6.2L5.7 6.2L5.7 9L3.3 9L3.3 5.6L2.9 5.6L2.9 8.8L1 8.8Q0.2 8.8 0.2 7.6Z"/><path d="M5.7 0 V3.6" stroke="#181818" stroke-width="0.6"/></g></svg>
<div class="t" style="left:345.9px;top:45px;font-size:13px;color:#9D9D9D;font-weight:normal;font-style:normal;letter-spacing:0.459px;">layout.blade.php</div>
<div class="a" style="left:477px;top:35px;width:121px;height:35px;border-right:1px solid #2B2B2B;border-bottom:1px solid #2B2B2B"></div>
<svg class="ic" style="left:491.1px;top:47px" width="13" height="11" viewBox="0 0 13 11"><g transform="translate(0,0.8)"><path fill="#A77DD1" d="M0 3.2Q0 0 3 0L9 0Q12 0 12 3L12 4.4Q12 5.4 10.8 5.9L10.8 9L8.1 9L8.1 6.2L5.7 6.2L5.7 9L3.3 9L3.3 5.6L2.9 5.6L2.9 8.8L1 8.8Q0.2 8.8 0.2 7.6Z"/><path d="M5.7 0 V3.6" stroke="#181818" stroke-width="0.6"/></g></svg>
<div class="t" style="left:509.6px;top:45px;font-size:13px;color:#9D9D9D;font-weight:normal;font-style:normal;letter-spacing:0.614px;">form.php</div>
<div class="a" style="left:597px;top:35px;width:179px;height:35px;border-right:1px solid #2B2B2B;border-bottom:1px solid #2B2B2B"></div>
<svg class="ic" style="left:611.2px;top:47px" width="13" height="11" viewBox="0 0 13 11"><g transform="translate(0,0.8)"><path fill="#A77DD1" d="M0 3.2Q0 0 3 0L9 0Q12 0 12 3L12 4.4Q12 5.4 10.8 5.9L10.8 9L8.1 9L8.1 6.2L5.7 6.2L5.7 9L3.3 9L3.3 5.6L2.9 5.6L2.9 8.8L1 8.8Q0.2 8.8 0.2 7.6Z"/><path d="M5.7 0 V3.6" stroke="#181818" stroke-width="0.6"/></g></svg>
<div class="t" style="left:629.7px;top:45px;font-size:13px;color:#9D9D9D;font-weight:normal;font-style:normal;letter-spacing:0.529px;">portfolio.blade.php</div>
<div class="a" style="left:775px;top:35px;width:177px;height:35px;border-right:1px solid #2B2B2B;border-bottom:1px solid #2B2B2B"></div>
<svg class="ic" style="left:789.2px;top:47px" width="13" height="11" viewBox="0 0 13 11"><g transform="translate(0,0.8)"><path fill="#A77DD1" d="M0 3.2Q0 0 3 0L9 0Q12 0 12 3L12 4.4Q12 5.4 10.8 5.9L10.8 9L8.1 9L8.1 6.2L5.7 6.2L5.7 9L3.3 9L3.3 5.6L2.9 5.6L2.9 8.8L1 8.8Q0.2 8.8 0.2 7.6Z"/><path d="M5.7 0 V3.6" stroke="#181818" stroke-width="0.6"/></g></svg>
<div class="t" style="left:807.7px;top:45px;font-size:13px;color:#9D9D9D;font-weight:normal;font-style:normal;letter-spacing:0.463px;">ItemController.php</div>
<div class="a" style="left:951px;top:35px;width:368px;height:35px;background:#1F1F1F;border-right:1px solid #2B2B2B;border-top:1px solid #0078D4"></div>
<svg class="ic" style="left:965px;top:47px" width="13" height="11" viewBox="0 0 13 11"><g transform="translate(0,0.8)"><path fill="#A77DD1" d="M0 3.2Q0 0 3 0L9 0Q12 0 12 3L12 4.4Q12 5.4 10.8 5.9L10.8 9L8.1 9L8.1 6.2L5.7 6.2L5.7 9L3.3 9L3.3 5.6L2.9 5.6L2.9 8.8L1 8.8Q0.2 8.8 0.2 7.6Z"/><path d="M5.7 0 V3.6" stroke="#1F1F1F" stroke-width="0.6"/></g></svg>
<div class="t" style="left:983.5px;top:45px;font-size:13px;color:#FFFFFF;font-weight:normal;font-style:italic;letter-spacing:0.042px;">2022_11_06_102418_create_permission_tables.php</div>
<svg class="ic" style="left:1297px;top:46px" width="12" height="12" viewBox="0 0 12 12"><path d="M2 2 L10 10 M10 2 L2 10" stroke="#CCCCCC" stroke-width="1.2"/></svg>
<svg class="ic" style="left:1863px;top:44px" width="16" height="16" viewBox="0 0 16 16"><rect x="1.5" y="1.5" width="13" height="12" rx="1" fill="none" stroke="#CCCCCC"/><path d="M7.5 1.5 V13.5" stroke="#CCCCCC"/></svg>
<div class="a" style="left:1891px;top:52px;width:2px;height:2px;background:#CCCCCC;box-shadow:5px 0 #CCCCCC,10px 0 #CCCCCC"></div>
<div class="t" style="left:330px;top:74px;font-size:13px;color:#A9A9A9;font-weight:normal;font-style:normal;letter-spacing:0.373px;">database</div>
<svg class="ic" style="left:387px;top:73px" width="16" height="16" viewBox="0 0 16 16"><path d="M6 3.5 L10.5 8 L6 12.5" fill="none" stroke="#A9A9A9" stroke-width="1.1"/></svg>
<div class="t" style="left:403.5px;top:74px;font-size:13px;color:#A9A9A9;font-weight:normal;font-style:normal;letter-spacing:0.348px;">migrations</div>
<svg class="ic" style="left:468px;top:73px" width="16" height="16" viewBox="0 0 16 16"><path d="M6 3.5 L10.5 8 L6 12.5" fill="none" stroke="#A9A9A9" stroke-width="1.1"/></svg>
<svg class="ic" style="left:487px;top:76px" width="13" height="11" viewBox="0 0 13 11"><g transform="translate(0,0.8)"><path fill="#A77DD1" d="M0 3.2Q0 0 3 0L9 0Q12 0 12 3L12 4.4Q12 5.4 10.8 5.9L10.8 9L8.1 9L8.1 6.2L5.7 6.2L5.7 9L3.3 9L3.3 5.6L2.9 5.6L2.9 8.8L1 8.8Q0.2 8.8 0.2 7.6Z"/><path d="M5.7 0 V3.6" stroke="#1F1F1F" stroke-width="0.6"/></g></svg>
<div class="t" style="left:505.5px;top:74px;font-size:13px;color:#A9A9A9;font-weight:normal;font-style:normal;letter-spacing:0.026px;">2022_11_06_102418_create_permission_tables.php</div>
<div class="a" style="left:314px;top:92px;width:1472px;height:934px;overflow:hidden">
<div class="ig" style="left:70px;top:12.0px;height:19px"></div>
<div class="ig" style="left:104px;top:12.0px;height:19px"></div>
<div class="ig" style="left:137px;top:12.0px;height:19px"></div>
<div class="ln" style="left:-17px;top:12.0px">50</div>
<div class="code" style="left:70.6px;top:12.0px">            <span style="color:#DA70D6">}</span></div>
<div class="ig" style="left:70px;top:31.0px;height:19px"></div>
<div class="ig" style="left:104px;top:31.0px;height:19px"></div>
<div class="ln" style="left:-17px;top:31.0px">51</div>
<div class="code" style="left:70.6px;top:31.0px">        <span style="color:#FFD700">}</span><span style="color:#179FFF">)</span>;</div>
<div class="ig" style="left:70px;top:50.0px;height:19px"></div>
<div class="ig" style="left:104px;top:50.0px;height:19px"></div>
<div class="ln" style="left:-17px;top:50.0px">52</div>
<div class="code" style="left:70.6px;top:50.0px"></div>
<div class="ig" style="left:70px;top:69.0px;height:19px"></div>
<div class="ig" style="left:104px;top:69.0px;height:19px"></div>
<div class="ln" style="left:-17px;top:69.0px">53</div>
<div class="code" style="left:70.6px;top:69.0px">        <span style="color:#4EC9B0">Schema</span>::<span style="color:#DCDCAA">create</span><span style="color:#179FFF">(</span><span style="color:#9CDCFE">$tableNames</span><span style="color:#FFD700">[</span><span style="color:#CE9178">&#x27;model_has_permissions&#x27;</span><span style="color:#FFD700">]</span>, <span style="color:#569CD6">function</span> <span style="color:#FFD700">(</span><span style="color:#4EC9B0">Blueprint</span> <span style="color:#9CDCFE">$table</span><span style="color:#FFD700">)</span> <span style="color:#569CD6">use</span> <span style="color:#FFD700">(</span><span style="color:#9CDCFE">$tableNames</span>, <span style="color:#9CDCFE">$columnNames</span>, <span style="color:#9CDCFE">$teams</span><span style="color:#FFD700">)</span> <span style="color:#FFD700">{</span></div>
<div class="ig" style="left:70px;top:88.0px;height:19px"></div>
<div class="ig" style="left:104px;top:88.0px;height:19px"></div>
<div class="ig" style="left:137px;top:88.0px;height:19px"></div>
<div class="ln" style="left:-17px;top:88.0px">54</div>
<div class="code" style="left:70.6px;top:88.0px">            <span style="color:#9CDCFE">$table</span>-&gt;<span style="color:#DCDCAA">unsignedBigInteger</span><span style="color:#DA70D6">(</span><span style="color:#4EC9B0">PermissionRegistrar</span>::<span style="color:#9CDCFE">$pivotPermission</span><span style="color:#DA70D6">)</span>;</div>
<div class="ig" style="left:70px;top:107.0px;height:19px"></div>
<div class="ig" style="left:104px;top:107.0px;height:19px"></div>
<div class="ig" style="left:137px;top:107.0px;height:19px"></div>
<div class="ln" style="left:-17px;top:107.0px">55</div>
<div class="code" style="left:70.6px;top:107.0px"></div>
<div class="ig" style="left:70px;top:126.0px;height:19px"></div>
<div class="ig" style="left:104px;top:126.0px;height:19px"></div>
<div class="ig" style="left:137px;top:126.0px;height:19px"></div>
<div class="ln" style="left:-17px;top:126.0px">56</div>
<div class="code" style="left:70.6px;top:126.0px">            <span style="color:#9CDCFE">$table</span>-&gt;<span style="color:#DCDCAA">string</span><span style="color:#DA70D6">(</span><span style="color:#CE9178">&#x27;model_type&#x27;</span><span style="color:#DA70D6">)</span>;</div>
<div class="ig" style="left:70px;top:145.0px;height:19px"></div>
<div class="ig" style="left:104px;top:145.0px;height:19px"></div>
<div class="ig" style="left:137px;top:145.0px;height:19px"></div>
<div class="ln" style="left:-17px;top:145.0px">57</div>
<div class="code" style="left:70.6px;top:145.0px">            <span style="color:#9CDCFE">$table</span>-&gt;<span style="color:#DCDCAA">unsignedBigInteger</span><span style="color:#DA70D6">(</span><span style="color:#9CDCFE">$columnNames</span><span style="color:#179FFF">[</span><span style="color:#CE9178">&#x27;model_morph_key&#x27;</span><span style="color:#179FFF">]</span><span style="color:#DA70D6">)</span>;</div>
<div class="ig" style="left:70px;top:164.0px;height:19px"></div>
<div class="ig" style="left:104px;top:164.0px;height:19px"></div>
<div class="ig" style="left:137px;top:164.0px;height:19px"></div>
<div class="ln" style="left:-17px;top:164.0px">58</div>
<div class="code" style="left:70.6px;top:164.0px">            <span style="color:#9CDCFE">$table</span>-&gt;<span style="color:#DCDCAA">index</span><span style="color:#DA70D6">(</span><span style="color:#179FFF">[</span><span style="color:#9CDCFE">$columnNames</span><span style="color:#FFD700">[</span><span style="color:#CE9178">&#x27;model_morph_key&#x27;</span><span style="color:#FFD700">]</span>, <span style="color:#CE9178">&#x27;model_type&#x27;</span><span style="color:#179FFF">]</span>, <span style="color:#CE9178">&#x27;model_has_permissions_model_id_model_type_index&#x27;</span><span style="color:#DA70D6">)</span>;</div>
<div class="ig" style="left:70px;top:183.0px;height:19px"></div>
<div class="ig" style="left:104px;top:183.0px;height:19px"></div>
<div class="ig" style="left:137px;top:183.0px;height:19px"></div>
<div class="ln" style="left:-17px;top:183.0px">59</div>
<div class="code" style="left:70.6px;top:183.0px"></div>
<div class="ig" style="left:70px;top:202.0px;height:19px"></div>
<div class="ig" style="left:104px;top:202.0px;height:19px"></div>
<div class="ig" style="left:137px;top:202.0px;height:19px"></div>
<div class="ln" style="left:-17px;top:202.0px">60</div>
<div class="code" style="left:70.6px;top:202.0px">            <span style="color:#9CDCFE">$table</span>-&gt;<span style="color:#DCDCAA">foreign</span><span style="color:#DA70D6">(</span><span style="color:#4EC9B0">PermissionRegistrar</span>::<span style="color:#9CDCFE">$pivotPermission</span><span style="color:#DA70D6">)</span></div>
<div class="ig" style="left:70px;top:221.0px;height:19px"></div>
<div class="ig" style="left:104px;top:221.0px;height:19px"></div>
<div class="ig" style="left:137px;top:221.0px;height:19px"></div>
<div class="ig" style="left:171px;top:221.0px;height:19px"></div>
<div class="ln" style="left:-17px;top:221.0px">61</div>
<div class="code" style="left:70.6px;top:221.0px">                -&gt;<span style="color:#DCDCAA">references</span><span style="color:#DA70D6">(</span><span style="color:#CE9178">&#x27;id&#x27;</span><span style="color:#DA70D6">)</span> <span style="color:#6A9955">// permission id</span></div>
<div class="ig" style="left:70px;top:240.0px;height:19px"></div>
<div class="ig" style="left:104px;top:240.0px;height:19px"></div>
<div class="ig" style="left:137px;top:240.0px;height:19px"></div>
<div class="ig" style="left:171px;top:240.0px;height:19px"></div>
<div class="ln" style="left:-17px;top:240.0px">62</div>
<div class="code" style="left:70.6px;top:240.0px">                -&gt;<span style="color:#DCDCAA">on</span><span style="color:#DA70D6">(</span><span style="color:#9CDCFE">$tableNames</span><span style="color:#179FFF">[</span><span style="color:#CE9178">&#x27;permissions&#x27;</span><span style="color:#179FFF">]</span><span style="color:#DA70D6">)</span></div>
<div class="ig" style="left:70px;top:259.0px;height:19px"></div>
<div class="ig" style="left:104px;top:259.0px;height:19px"></div>
<div class="ig" style="left:137px;top:259.0px;height:19px"></div>
<div class="ig" style="left:171px;top:259.0px;height:19px"></div>
<div class="ln" style="left:-17px;top:259.0px">63</div>
<div class="code" style="left:70.6px;top:259.0px">                -&gt;<span style="color:#DCDCAA">onDelete</span><span style="color:#DA70D6">(</span><span style="color:#CE9178">&#x27;cascade&#x27;</span><span style="color:#DA70D6">)</span>;</div>
<div class="ig" style="left:70px;top:278.0px;height:19px"></div>
<div class="ig" style="left:104px;top:278.0px;height:19px"></div>
<div class="ig" style="left:137px;top:278.0px;height:19px"></div>
<div class="ln" style="left:-17px;top:278.0px">64</div>
<div class="code" style="left:70.6px;top:278.0px">            <span style="color:#C586C0">if</span> <span style="color:#DA70D6">(</span><span style="color:#9CDCFE">$teams</span><span style="color:#DA70D6">)</span> <span style="color:#DA70D6">{</span></div>
<div class="ig" style="left:70px;top:297.0px;height:19px"></div>
<div class="ig" style="left:104px;top:297.0px;height:19px"></div>
<div class="ig" style="left:137px;top:297.0px;height:19px"></div>
<div class="ig" style="left:171px;top:297.0px;height:19px"></div>
<div class="ln" style="left:-17px;top:297.0px">65</div>
<div class="code" style="left:70.6px;top:297.0px">                <span style="color:#9CDCFE">$table</span>-&gt;<span style="color:#DCDCAA">unsignedBigInteger</span><span style="color:#179FFF">(</span><span style="color:#9CDCFE">$columnNames</span><span style="color:#FFD700">[</span><span style="color:#CE9178">&#x27;team_foreign_key&#x27;</span><span style="color:#FFD700">]</span><span style="color:#179FFF">)</span>;</div>
<div class="ig" style="left:70px;top:316.0px;height:19px"></div>
<div class="ig" style="left:104px;top:316.0px;height:19px"></div>
<div class="ig" style="left:137px;top:316.0px;height:19px"></div>
<div class="ig" style="left:171px;top:316.0px;height:19px"></div>
<div class="ln" style="left:-17px;top:316.0px">66</div>
<div class="code" style="left:70.6px;top:316.0px">                <span style="color:#9CDCFE">$table</span>-&gt;<span style="color:#DCDCAA">index</span><span style="color:#179FFF">(</span><span style="color:#9CDCFE">$columnNames</span><span style="color:#FFD700">[</span><span style="color:#CE9178">&#x27;team_foreign_key&#x27;</span><span style="color:#FFD700">]</span>, <span style="color:#CE9178">&#x27;model_has_permissions_team_foreign_key_index&#x27;</span><span style="color:#179FFF">)</span>;</div>
<div class="ig" style="left:70px;top:335.0px;height:19px"></div>
<div class="ig" style="left:104px;top:335.0px;height:19px"></div>
<div class="ig" style="left:137px;top:335.0px;height:19px"></div>
<div class="ig" style="left:171px;top:335.0px;height:19px"></div>
<div class="ln" style="left:-17px;top:335.0px">67</div>
<div class="code" style="left:70.6px;top:335.0px"></div>
<div class="ig" style="left:70px;top:354.0px;height:19px"></div>
<div class="ig" style="left:104px;top:354.0px;height:19px"></div>
<div class="ig" style="left:137px;top:354.0px;height:19px"></div>
<div class="ig" style="left:171px;top:354.0px;height:19px"></div>
<div class="ln" style="left:-17px;top:354.0px">68</div>
<div class="code" style="left:70.6px;top:354.0px">                <span style="color:#9CDCFE">$table</span>-&gt;<span style="color:#DCDCAA">primary</span><span style="color:#179FFF">(</span><span style="color:#FFD700">[</span><span style="color:#9CDCFE">$columnNames</span><span style="color:#DA70D6">[</span><span style="color:#CE9178">&#x27;team_foreign_key&#x27;</span><span style="color:#DA70D6">]</span>, <span style="color:#4EC9B0">PermissionRegistrar</span>::<span style="color:#9CDCFE">$pivotPermission</span>, <span style="color:#9CDCFE">$columnNames</span><span style="color:#DA70D6">[</span><span style="color:#CE9178">&#x27;model_morph_key&#x27;</span><span style="color:#DA70D6">]</span>, <span style="color:#CE9178">&#x27;model_type&#x27;</span><span style="color:#FFD700">]</span>,</div>
<div class="ig" style="left:70px;top:373.0px;height:19px"></div>
<div class="ig" style="left:104px;top:373.0px;height:19px"></div>
<div class="ig" style="left:137px;top:373.0px;height:19px"></div>
<div class="ig" style="left:171px;top:373.0px;height:19px"></div>
<div class="ig" style="left:204px;top:373.0px;height:19px"></div>
<div class="ln" style="left:-17px;top:373.0px">69</div>
<div class="code" style="left:70.6px;top:373.0px">                    <span style="color:#CE9178">&#x27;model_has_permissions_permission_model_type_primary&#x27;</span><span style="color:#179FFF">)</span>;</div>
<div class="ig" style="left:70px;top:392.0px;height:19px"></div>
<div class="ig" style="left:104px;top:392.0px;height:19px"></div>
<div class="ig" style="left:137px;top:392.0px;height:19px"></div>
<div class="ln" style="left:-17px;top:392.0px">70</div>
<div class="code" style="left:70.6px;top:392.0px">            <span style="color:#DA70D6">}</span> <span style="color:#C586C0">else</span> <span style="color:#DA70D6">{</span></div>
<div class="ig" style="left:70px;top:411.0px;height:19px"></div>
<div class="ig" style="left:104px;top:411.0px;height:19px"></div>
<div class="ig" style="left:137px;top:411.0px;height:19px"></div>
<div class="ig" style="left:171px;top:411.0px;height:19px"></div>
<div class="ln" style="left:-17px;top:411.0px">71</div>
<div class="code" style="left:70.6px;top:411.0px">                <span style="color:#9CDCFE">$table</span>-&gt;<span style="color:#DCDCAA">primary</span><span style="color:#179FFF">(</span><span style="color:#FFD700">[</span><span style="color:#4EC9B0">PermissionRegistrar</span>::<span style="color:#9CDCFE">$pivotPermission</span>, <span style="color:#9CDCFE">$columnNames</span><span style="color:#DA70D6">[</span><span style="color:#CE9178">&#x27;model_morph_key&#x27;</span><span style="color:#DA70D6">]</span>, <span style="color:#CE9178">&#x27;model_type&#x27;</span><span style="color:#FFD700">]</span>,</div>
<div class="ig" style="left:70px;top:430.0px;height:19px"></div>
<div class="ig" style="left:104px;top:430.0px;height:19px"></div>
<div class="ig" style="left:137px;top:430.0px;height:19px"></div>
<div class="ig" style="left:171px;top:430.0px;height:19px"></div>
<div class="ig" style="left:204px;top:430.0px;height:19px"></div>
<div class="ln" style="left:-17px;top:430.0px">72</div>
<div class="code" style="left:70.6px;top:430.0px">                    <span style="color:#CE9178">&#x27;model_has_permissions_permission_model_type_primary&#x27;</span><span style="color:#179FFF">)</span>;</div>
<div class="ig" style="left:70px;top:449.0px;height:19px"></div>
<div class="ig" style="left:104px;top:449.0px;height:19px"></div>
<div class="ig" style="left:137px;top:449.0px;height:19px"></div>
<div class="ln" style="left:-17px;top:449.0px">73</div>
<div class="code" style="left:70.6px;top:449.0px">            <span style="color:#DA70D6">}</span></div>
<div class="ig" style="left:70px;top:468.0px;height:19px"></div>
<div class="ig" style="left:104px;top:468.0px;height:19px"></div>
<div class="ig" style="left:137px;top:468.0px;height:19px"></div>
<div class="ln" style="left:-17px;top:468.0px">74</div>
<div class="code" style="left:70.6px;top:468.0px"></div>
<div class="ig" style="left:70px;top:487.0px;height:19px"></div>
<div class="ig" style="left:104px;top:487.0px;height:19px"></div>
<div class="ln" style="left:-17px;top:487.0px">75</div>
<div class="code" style="left:70.6px;top:487.0px">        <span style="color:#FFD700">}</span><span style="color:#179FFF">)</span>;</div>
<div class="ig" style="left:70px;top:506.0px;height:19px"></div>
<div class="ig" style="left:104px;top:506.0px;height:19px"></div>
<div class="ln" style="left:-17px;top:506.0px">76</div>
<div class="code" style="left:70.6px;top:506.0px"></div>
<div class="ig" style="left:70px;top:525.0px;height:19px"></div>
<div class="ig" style="left:104px;top:525.0px;height:19px"></div>
<div class="ln" style="left:-17px;top:525.0px">77</div>
<div class="code" style="left:70.6px;top:525.0px">        <span style="color:#4EC9B0">Schema</span>::<span style="color:#DCDCAA">create</span><span style="color:#179FFF">(</span><span style="color:#9CDCFE">$tableNames</span><span style="color:#FFD700">[</span><span style="color:#CE9178">&#x27;model_has_roles&#x27;</span><span style="color:#FFD700">]</span>, <span style="color:#569CD6">function</span> <span style="color:#FFD700">(</span><span style="color:#4EC9B0">Blueprint</span> <span style="color:#9CDCFE">$table</span><span style="color:#FFD700">)</span> <span style="color:#569CD6">use</span> <span style="color:#FFD700">(</span><span style="color:#9CDCFE">$tableNames</span>, <span style="color:#9CDCFE">$columnNames</span>, <span style="color:#9CDCFE">$teams</span><span style="color:#FFD700">)</span> <span style="color:#FFD700">{</span></div>
<div class="ig" style="left:70px;top:544.0px;height:19px"></div>
<div class="ig" style="left:104px;top:544.0px;height:19px"></div>
<div class="ig" style="left:137px;top:544.0px;height:19px"></div>
<div class="ln" style="left:-17px;top:544.0px">78</div>
<div class="code" style="left:70.6px;top:544.0px">            <span style="color:#9CDCFE">$table</span>-&gt;<span style="color:#DCDCAA">unsignedBigInteger</span><span style="color:#DA70D6">(</span><span style="color:#4EC9B0">PermissionRegistrar</span>::<span style="color:#9CDCFE">$pivotRole</span><span style="color:#DA70D6">)</span>;</div>
<div class="ig" style="left:70px;top:563.0px;height:19px"></div>
<div class="ig" style="left:104px;top:563.0px;height:19px"></div>
<div class="ig" style="left:137px;top:563.0px;height:19px"></div>
<div class="ln" style="left:-17px;top:563.0px">79</div>
<div class="code" style="left:70.6px;top:563.0px"></div>
<div class="ig" style="left:70px;top:582.0px;height:19px"></div>
<div class="ig" style="left:104px;top:582.0px;height:19px"></div>
<div class="ig" style="left:137px;top:582.0px;height:19px"></div>
<div class="ln" style="left:-17px;top:582.0px">80</div>
<div class="code" style="left:70.6px;top:582.0px">            <span style="color:#9CDCFE">$table</span>-&gt;<span style="color:#DCDCAA">string</span><span style="color:#DA70D6">(</span><span style="color:#CE9178">&#x27;model_type&#x27;</span><span style="color:#DA70D6">)</span>;</div>
<div class="ig" style="left:70px;top:601.0px;height:19px"></div>
<div class="ig" style="left:104px;top:601.0px;height:19px"></div>
<div class="ig" style="left:137px;top:601.0px;height:19px"></div>
<div class="ln" style="left:-17px;top:601.0px">81</div>
<div class="code" style="left:70.6px;top:601.0px">            <span style="color:#9CDCFE">$table</span>-&gt;<span style="color:#DCDCAA">unsignedBigInteger</span><span style="color:#DA70D6">(</span><span style="color:#9CDCFE">$columnNames</span><span style="color:#179FFF">[</span><span style="color:#CE9178">&#x27;model_morph_key&#x27;</span><span style="color:#179FFF">]</span><span style="color:#DA70D6">)</span>;</div>
<div class="ig" style="left:70px;top:620.0px;height:19px"></div>
<div class="ig" style="left:104px;top:620.0px;height:19px"></div>
<div class="ig" style="left:137px;top:620.0px;height:19px"></div>
<div class="ln" style="left:-17px;top:620.0px">82</div>
<div class="code" style="left:70.6px;top:620.0px">            <span style="color:#9CDCFE">$table</span>-&gt;<span style="color:#DCDCAA">index</span><span style="color:#DA70D6">(</span><span style="color:#179FFF">[</span><span style="color:#9CDCFE">$columnNames</span><span style="color:#FFD700">[</span><span style="color:#CE9178">&#x27;model_morph_key&#x27;</span><span style="color:#FFD700">]</span>, <span style="color:#CE9178">&#x27;model_type&#x27;</span><span style="color:#179FFF">]</span>, <span style="color:#CE9178">&#x27;model_has_roles_model_id_model_type_index&#x27;</span><span style="color:#DA70D6">)</span>;</div>
<div class="ig" style="left:70px;top:639.0px;height:19px"></div>
<div class="ig" style="left:104px;top:639.0px;height:19px"></div>
<div class="ig" style="left:137px;top:639.0px;height:19px"></div>
<div class="ln" style="left:-17px;top:639.0px">83</div>
<div class="code" style="left:70.6px;top:639.0px"></div>
<div class="ig" style="left:70px;top:658.0px;height:19px"></div>
<div class="ig" style="left:104px;top:658.0px;height:19px"></div>
<div class="ig" style="left:137px;top:658.0px;height:19px"></div>
<div class="ln" style="left:-17px;top:658.0px">84</div>
<div class="code" style="left:70.6px;top:658.0px">            <span style="color:#9CDCFE">$table</span>-&gt;<span style="color:#DCDCAA">foreign</span><span style="color:#DA70D6">(</span><span style="color:#4EC9B0">PermissionRegistrar</span>::<span style="color:#9CDCFE">$pivotRole</span><span style="color:#DA70D6">)</span></div>
<div class="ig" style="left:70px;top:677.0px;height:19px"></div>
<div class="ig" style="left:104px;top:677.0px;height:19px"></div>
<div class="ig" style="left:137px;top:677.0px;height:19px"></div>
<div class="ig" style="left:171px;top:677.0px;height:19px"></div>
<div class="ln" style="left:-17px;top:677.0px">85</div>
<div class="code" style="left:70.6px;top:677.0px">                -&gt;<span style="color:#DCDCAA">references</span><span style="color:#DA70D6">(</span><span style="color:#CE9178">&#x27;id&#x27;</span><span style="color:#DA70D6">)</span> <span style="color:#6A9955">// role id</span></div>
<div class="ig" style="left:70px;top:696.0px;height:19px"></div>
<div class="ig" style="left:104px;top:696.0px;height:19px"></div>
<div class="ig" style="left:137px;top:696.0px;height:19px"></div>
<div class="ig" style="left:171px;top:696.0px;height:19px"></div>
<div class="ln" style="left:-17px;top:696.0px">86</div>
<div class="code" style="left:70.6px;top:696.0px">                -&gt;<span style="color:#DCDCAA">on</span><span style="color:#DA70D6">(</span><span style="color:#9CDCFE">$tableNames</span><span style="color:#179FFF">[</span><span style="color:#CE9178">&#x27;roles&#x27;</span><span style="color:#179FFF">]</span><span style="color:#DA70D6">)</span></div>
<div class="ig" style="left:70px;top:715.0px;height:19px"></div>
<div class="ig" style="left:104px;top:715.0px;height:19px"></div>
<div class="ig" style="left:137px;top:715.0px;height:19px"></div>
<div class="ig" style="left:171px;top:715.0px;height:19px"></div>
<div class="ln" style="left:-17px;top:715.0px">87</div>
<div class="code" style="left:70.6px;top:715.0px">                -&gt;<span style="color:#DCDCAA">onDelete</span><span style="color:#DA70D6">(</span><span style="color:#CE9178">&#x27;cascade&#x27;</span><span style="color:#DA70D6">)</span>;</div>
<div class="ig" style="left:70px;top:734.0px;height:19px"></div>
<div class="ig" style="left:104px;top:734.0px;height:19px"></div>
<div class="ig" style="left:137px;top:734.0px;height:19px"></div>
<div class="ln" style="left:-17px;top:734.0px">88</div>
<div class="code" style="left:70.6px;top:734.0px">            <span style="color:#C586C0">if</span> <span style="color:#DA70D6">(</span><span style="color:#9CDCFE">$teams</span><span style="color:#DA70D6">)</span> <span style="color:#DA70D6">{</span></div>
<div class="ig" style="left:70px;top:753.0px;height:19px"></div>
<div class="ig" style="left:104px;top:753.0px;height:19px"></div>
<div class="ig" style="left:137px;top:753.0px;height:19px"></div>
<div class="ig" style="left:171px;top:753.0px;height:19px"></div>
<div class="ln" style="left:-17px;top:753.0px">89</div>
<div class="code" style="left:70.6px;top:753.0px">                <span style="color:#9CDCFE">$table</span>-&gt;<span style="color:#DCDCAA">unsignedBigInteger</span><span style="color:#179FFF">(</span><span style="color:#9CDCFE">$columnNames</span><span style="color:#FFD700">[</span><span style="color:#CE9178">&#x27;team_foreign_key&#x27;</span><span style="color:#FFD700">]</span><span style="color:#179FFF">)</span>;</div>
<div class="ig" style="left:70px;top:772.0px;height:19px"></div>
<div class="ig" style="left:104px;top:772.0px;height:19px"></div>
<div class="ig" style="left:137px;top:772.0px;height:19px"></div>
<div class="ig" style="left:171px;top:772.0px;height:19px"></div>
<div class="ln" style="left:-17px;top:772.0px">90</div>
<div class="code" style="left:70.6px;top:772.0px">                <span style="color:#9CDCFE">$table</span>-&gt;<span style="color:#DCDCAA">index</span><span style="color:#179FFF">(</span><span style="color:#9CDCFE">$columnNames</span><span style="color:#FFD700">[</span><span style="color:#CE9178">&#x27;team_foreign_key&#x27;</span><span style="color:#FFD700">]</span>, <span style="color:#CE9178">&#x27;model_has_roles_team_foreign_key_index&#x27;</span><span style="color:#179FFF">)</span>;</div>
<div class="ig" style="left:70px;top:791.0px;height:19px"></div>
<div class="ig" style="left:104px;top:791.0px;height:19px"></div>
<div class="ig" style="left:137px;top:791.0px;height:19px"></div>
<div class="ig" style="left:171px;top:791.0px;height:19px"></div>
<div class="ln" style="left:-17px;top:791.0px">91</div>
<div class="code" style="left:70.6px;top:791.0px"></div>
<div class="ig" style="left:70px;top:810.0px;height:19px"></div>
<div class="ig" style="left:104px;top:810.0px;height:19px"></div>
<div class="ig" style="left:137px;top:810.0px;height:19px"></div>
<div class="ig" style="left:171px;top:810.0px;height:19px"></div>
<div class="ln" style="left:-17px;top:810.0px">92</div>
<div class="code" style="left:70.6px;top:810.0px">                <span style="color:#9CDCFE">$table</span>-&gt;<span style="color:#DCDCAA">primary</span><span style="color:#179FFF">(</span><span style="color:#FFD700">[</span><span style="color:#9CDCFE">$columnNames</span><span style="color:#DA70D6">[</span><span style="color:#CE9178">&#x27;team_foreign_key&#x27;</span><span style="color:#DA70D6">]</span>, <span style="color:#4EC9B0">PermissionRegistrar</span>::<span style="color:#9CDCFE">$pivotRole</span>, <span style="color:#9CDCFE">$columnNames</span><span style="color:#DA70D6">[</span><span style="color:#CE9178">&#x27;model_morph_key&#x27;</span><span style="color:#DA70D6">]</span>, <span style="color:#CE9178">&#x27;model_type&#x27;</span><span style="color:#FFD700">]</span>,</div>
<div class="ig" style="left:70px;top:829.0px;height:19px"></div>
<div class="ig" style="left:104px;top:829.0px;height:19px"></div>
<div class="ig" style="left:137px;top:829.0px;height:19px"></div>
<div class="ig" style="left:171px;top:829.0px;height:19px"></div>
<div class="ig" style="left:204px;top:829.0px;height:19px"></div>
<div class="ln" style="left:-17px;top:829.0px">93</div>
<div class="code" style="left:70.6px;top:829.0px">                    <span style="color:#CE9178">&#x27;model_has_roles_role_model_type_primary&#x27;</span><span style="color:#179FFF">)</span>;</div>
<div class="ig" style="left:70px;top:848.0px;height:19px"></div>
<div class="ig" style="left:104px;top:848.0px;height:19px"></div>
<div class="ig" style="left:137px;top:848.0px;height:19px"></div>
<div class="ln" style="left:-17px;top:848.0px">94</div>
<div class="code" style="left:70.6px;top:848.0px">            <span style="color:#DA70D6">}</span> <span style="color:#C586C0">else</span> <span style="color:#DA70D6">{</span></div>
<div class="ig" style="left:70px;top:867.0px;height:19px"></div>
<div class="ig" style="left:104px;top:867.0px;height:19px"></div>
<div class="ig" style="left:137px;top:867.0px;height:19px"></div>
<div class="ig" style="left:171px;top:867.0px;height:19px"></div>
<div class="ln" style="left:-17px;top:867.0px">95</div>
<div class="code" style="left:70.6px;top:867.0px">                <span style="color:#9CDCFE">$table</span>-&gt;<span style="color:#DCDCAA">primary</span><span style="color:#179FFF">(</span><span style="color:#FFD700">[</span><span style="color:#4EC9B0">PermissionRegistrar</span>::<span style="color:#9CDCFE">$pivotRole</span>, <span style="color:#9CDCFE">$columnNames</span><span style="color:#DA70D6">[</span><span style="color:#CE9178">&#x27;model_morph_key&#x27;</span><span style="color:#DA70D6">]</span>, <span style="color:#CE9178">&#x27;model_type&#x27;</span><span style="color:#FFD700">]</span>,</div>
<div class="ig" style="left:70px;top:886.0px;height:19px"></div>
<div class="ig" style="left:104px;top:886.0px;height:19px"></div>
<div class="ig" style="left:137px;top:886.0px;height:19px"></div>
<div class="ig" style="left:171px;top:886.0px;height:19px"></div>
<div class="ig" style="left:204px;top:886.0px;height:19px"></div>
<div class="ln" style="left:-17px;top:886.0px">96</div>
<div class="code" style="left:70.6px;top:886.0px">                    <span style="color:#CE9178">&#x27;model_has_roles_role_model_type_primary&#x27;</span><span style="color:#179FFF">)</span>;</div>
<div class="ig" style="left:70px;top:905.0px;height:19px"></div>
<div class="ig" style="left:104px;top:905.0px;height:19px"></div>
<div class="ig" style="left:137px;top:905.0px;height:19px"></div>
<div class="ln" style="left:-17px;top:905.0px">97</div>
<div class="code" style="left:70.6px;top:905.0px">            <span style="color:#DA70D6">}</span></div>
<div class="ig" style="left:70px;top:924.0px;height:19px"></div>
<div class="ig" style="left:104px;top:924.0px;height:19px"></div>
<div class="ln" style="left:-17px;top:924.0px">98</div>
<div class="code" style="left:70.6px;top:924.0px">        <span style="color:#FFD700">}</span><span style="color:#179FFF">)</span>;</div>
</div>
<div class="a" style="left:314px;top:91px;width:1472px;height:39px;background:#1F1F1F"></div>
<div class="a" style="left:314px;top:130px;width:1472px;height:3px;background:linear-gradient(rgba(0,0,0,1),rgba(0,0,0,0.35))"></div>
<div class="ln" style="left:297px;top:93px">9</div>
<div class="code" style="left:384.6px;top:93px"><span style="color:#FFD700">{</span></div>
<div class="ln" style="left:297px;top:112px">16</div>
<div class="code" style="left:384.6px;top:112px">    <span style="color:#DA70D6">{</span></div>
<svg class="a" style="left:1794px;top:92px" width="112" height="300" viewBox="0 0 112 300" shape-rendering="crispEdges"><defs><pattern id="stp" width="2" height="2" patternUnits="userSpaceOnUse"><rect x="1" y="0" width="1" height="1" fill="#1F1F1F" fill-opacity="0.35"/><rect x="0" y="1" width="2" height="1" fill="#1F1F1F" fill-opacity="0.7"/></pattern></defs><g opacity="0.7"><path fill="#569CD6" d="M0 0h5v2h-5zM0 4h3v2h-3zM0 6h3v2h-3zM0 8h3v2h-3zM0 10h3v2h-3zM0 14h5v2h-5zM29 14h7v2h-7zM4 28h6v2h-6zM11 28h8v2h-8zM18 42h3v2h-3zM64 46h4v2h-4zM18 48h3v2h-3zM51 54h8v2h-8zM45 72h8v2h-8zM73 72h3v2h-3zM61 104h8v2h-8zM89 104h3v2h-3zM55 152h8v2h-8zM83 152h3v2h-3zM60 198h8v2h-8zM88 198h3v2h-3zM103 234h4v2h-4zM4 252h6v2h-6zM11 252h8v2h-8zM18 262h3v2h-3z"/><path fill="#D4D4D4" d="M4 4h31v2h-31zM44 4h1v2h-1zM4 6h27v2h-27zM40 6h1v2h-1zM4 8h27v2h-27zM37 8h1v2h-1zM4 10h18v2h-18zM41 10h1v2h-1zM20 32h1v2h-1zM54 32h1v2h-1zM21 34h1v2h-1zM56 34h1v2h-1zM15 36h1v2h-1zM43 36h1v2h-1zM19 46h1v2h-1zM20 46h1v2h-1zM61 46h1v2h-1zM62 46h1v2h-1zM14 54h1v2h-1zM15 54h1v2h-1zM49 54h1v2h-1zM18 56h1v2h-1zM19 56h1v2h-1zM39 56h1v2h-1zM18 58h1v2h-1zM19 58h1v2h-1zM34 58h1v2h-1zM18 60h1v2h-1zM19 60h1v2h-1zM40 60h1v2h-1zM18 62h1v2h-1zM19 62h1v2h-1zM32 62h1v2h-1zM18 66h1v2h-1zM19 66h1v2h-1zM34 66h1v2h-1zM50 66h1v2h-1zM10 68h1v2h-1zM14 72h1v2h-1zM15 72h1v2h-1zM43 72h1v2h-1zM84 72h1v2h-1zM18 74h1v2h-1zM19 74h1v2h-1zM39 74h1v2h-1zM23 76h1v2h-1zM24 76h1v2h-1zM22 78h1v2h-1zM23 78h1v2h-1zM76 78h1v2h-1zM77 78h1v2h-1zM88 78h1v2h-1zM22 80h1v2h-1zM23 80h1v2h-1zM62 80h1v2h-1zM95 80h1v2h-1zM18 84h1v2h-1zM19 84h1v2h-1zM34 84h1v2h-1zM18 86h1v2h-1zM19 86h1v2h-1zM40 86h1v2h-1zM18 88h1v2h-1zM19 88h1v2h-1zM32 88h1v2h-1zM23 90h1v2h-1zM24 90h1v2h-1zM22 92h1v2h-1zM23 92h1v2h-1zM64 92h1v2h-1zM72 92h1v2h-1zM88 92h1v2h-1zM22 96h1v2h-1zM23 96h1v2h-1zM38 96h1v2h-1zM54 96h1v2h-1zM10 100h1v2h-1zM14 104h1v2h-1zM15 104h1v2h-1zM59 104h1v2h-1zM105 104h1v2h-1zM18 106h1v2h-1zM19 106h1v2h-1zM58 106h1v2h-1zM59 106h1v2h-1zM77 106h1v2h-1zM18 110h1v2h-1zM19 110h1v2h-1zM40 110h1v2h-1zM18 112h1v2h-1zM19 112h1v2h-1zM71 112h1v2h-1zM18 114h1v2h-1zM19 114h1v2h-1zM58 114h1v2h-1zM73 114h1v2h-1zM18 118h1v2h-1zM19 118h1v2h-1zM47 118h1v2h-1zM48 118h1v2h-1zM16 120h1v2h-1zM17 120h1v2h-1zM16 122h1v2h-1zM17 122h1v2h-1zM16 124h1v2h-1zM17 124h1v2h-1zM37 124h1v2h-1zM22 128h1v2h-1zM23 128h1v2h-1zM76 128h1v2h-1zM22 130h1v2h-1zM23 130h1v2h-1zM62 130h1v2h-1zM111 130h1v2h-1zM22 134h1v2h-1zM23 134h1v2h-1zM65 134h1v2h-1zM86 134h1v2h-1zM87 134h1v2h-1zM104 134h1v2h-1zM74 136h1v2h-1zM22 140h1v2h-1zM23 140h1v2h-1zM52 140h1v2h-1zM53 140h1v2h-1zM70 140h1v2h-1zM103 140h1v2h-1zM74 142h1v2h-1zM10 148h1v2h-1zM14 152h1v2h-1zM15 152h1v2h-1zM53 152h1v2h-1zM99 152h1v2h-1zM18 154h1v2h-1zM19 154h1v2h-1zM58 154h1v2h-1zM59 154h1v2h-1zM71 154h1v2h-1zM18 158h1v2h-1zM19 158h1v2h-1zM40 158h1v2h-1zM18 160h1v2h-1zM19 160h1v2h-1zM71 160h1v2h-1zM18 162h1v2h-1zM19 162h1v2h-1zM58 162h1v2h-1zM73 162h1v2h-1zM18 166h1v2h-1zM19 166h1v2h-1zM47 166h1v2h-1zM48 166h1v2h-1zM16 168h1v2h-1zM17 168h1v2h-1zM16 170h1v2h-1zM17 170h1v2h-1zM16 172h1v2h-1zM17 172h1v2h-1zM37 172h1v2h-1zM22 176h1v2h-1zM23 176h1v2h-1zM76 176h1v2h-1zM22 178h1v2h-1zM23 178h1v2h-1zM62 178h1v2h-1zM105 178h1v2h-1zM22 182h1v2h-1zM23 182h1v2h-1zM65 182h1v2h-1zM86 182h1v2h-1zM87 182h1v2h-1zM98 182h1v2h-1zM62 184h1v2h-1zM22 188h1v2h-1zM23 188h1v2h-1zM52 188h1v2h-1zM53 188h1v2h-1zM64 188h1v2h-1zM97 188h1v2h-1zM62 190h1v2h-1zM10 194h1v2h-1zM14 198h1v2h-1zM15 198h1v2h-1zM58 198h1v2h-1zM18 200h1v2h-1zM19 200h1v2h-1zM58 200h1v2h-1zM59 200h1v2h-1zM77 200h1v2h-1zM18 202h1v2h-1zM19 202h1v2h-1zM58 202h1v2h-1zM59 202h1v2h-1zM71 202h1v2h-1zM18 206h1v2h-1zM19 206h1v2h-1zM47 206h1v2h-1zM48 206h1v2h-1zM16 208h1v2h-1zM17 208h1v2h-1zM16 210h1v2h-1zM17 210h1v2h-1zM16 212h1v2h-1zM17 212h1v2h-1zM37 212h1v2h-1zM18 216h1v2h-1zM19 216h1v2h-1zM47 216h1v2h-1zM48 216h1v2h-1zM16 218h1v2h-1zM17 218h1v2h-1zM16 220h1v2h-1zM17 220h1v2h-1zM16 222h1v2h-1zM17 222h1v2h-1zM37 222h1v2h-1zM18 226h1v2h-1zM19 226h1v2h-1zM48 226h1v2h-1zM49 226h1v2h-1zM66 226h1v2h-1zM87 226h1v2h-1zM88 226h1v2h-1zM100 226h1v2h-1zM10 228h1v2h-1zM12 234h1v2h-1zM13 234h1v2h-1zM53 234h1v2h-1zM54 234h1v2h-1zM66 234h1v2h-1zM101 234h1v2h-1zM12 236h1v2h-1zM13 236h1v2h-1zM52 236h1v2h-1zM20 256h1v2h-1zM54 256h1v2h-1zM14 268h1v2h-1zM15 268h1v2h-1zM57 268h1v2h-1zM14 270h1v2h-1zM15 270h1v2h-1zM52 270h1v2h-1zM14 272h1v2h-1zM15 272h1v2h-1zM58 272h1v2h-1zM14 274h1v2h-1zM15 274h1v2h-1zM42 274h1v2h-1zM14 276h1v2h-1zM15 276h1v2h-1zM48 276h1v2h-1z"/><path fill="#4EC9B0" d="M35 4h9v2h-9zM31 6h9v2h-9zM31 8h6v2h-6zM22 10h19v2h-19zM6 14h22v2h-22zM37 14h9v2h-9zM8 54h6v2h-6zM61 54h9v2h-9zM8 72h6v2h-6zM55 72h9v2h-9zM8 104h6v2h-6zM71 104h9v2h-9zM39 106h19v2h-19zM28 118h19v2h-19zM67 134h19v2h-19zM33 140h19v2h-19zM8 152h6v2h-6zM65 152h9v2h-9zM39 154h19v2h-19zM28 166h19v2h-19zM67 182h19v2h-19zM33 188h19v2h-19zM8 198h6v2h-6zM70 198h9v2h-9zM39 200h19v2h-19zM39 202h19v2h-19zM28 206h19v2h-19zM28 216h19v2h-19zM29 226h19v2h-19zM68 226h19v2h-19zM8 268h6v2h-6zM8 270h6v2h-6zM8 272h6v2h-6zM8 274h6v2h-6zM8 276h6v2h-6z"/><path fill="#FFD700" d="M0 16h1v2h-1zM17 40h1v2h-1zM29 40h1v2h-1zM32 42h1v2h-1zM27 46h1v2h-1zM68 46h1v2h-1zM32 48h1v2h-1zM34 54h1v2h-1zM48 54h1v2h-1zM60 54h1v2h-1zM77 54h1v2h-1zM79 54h1v2h-1zM8 68h1v2h-1zM34 72h1v2h-1zM42 72h1v2h-1zM54 72h1v2h-1zM71 72h1v2h-1zM77 72h1v2h-1zM98 72h1v2h-1zM100 72h1v2h-1zM55 78h1v2h-1zM74 78h1v2h-1zM42 80h1v2h-1zM61 80h1v2h-1zM31 92h1v2h-1zM86 92h1v2h-1zM31 96h1v2h-1zM52 96h1v2h-1zM8 100h1v2h-1zM34 104h1v2h-1zM58 104h1v2h-1zM70 104h1v2h-1zM87 104h1v2h-1zM93 104h1v2h-1zM39 114h1v2h-1zM57 114h1v2h-1zM55 128h1v2h-1zM74 128h1v2h-1zM42 130h1v2h-1zM61 130h1v2h-1zM32 134h1v2h-1zM32 140h1v2h-1zM8 148h1v2h-1zM34 152h1v2h-1zM52 152h1v2h-1zM64 152h1v2h-1zM81 152h1v2h-1zM87 152h1v2h-1zM39 162h1v2h-1zM57 162h1v2h-1zM55 176h1v2h-1zM74 176h1v2h-1zM42 178h1v2h-1zM61 178h1v2h-1zM32 182h1v2h-1zM32 188h1v2h-1zM111 188h1v2h-1zM8 194h1v2h-1zM34 198h1v2h-1zM57 198h1v2h-1zM69 198h1v2h-1zM86 198h1v2h-1zM92 198h1v2h-1zM104 198h1v2h-1zM106 198h1v2h-1zM8 228h1v2h-1zM26 234h1v2h-1zM51 234h1v2h-1zM74 234h1v2h-1zM99 234h1v2h-1zM27 236h1v2h-1zM50 236h1v2h-1zM17 260h1v2h-1zM29 260h1v2h-1zM32 262h1v2h-1zM32 268h1v2h-1zM55 268h1v2h-1zM32 270h1v2h-1zM50 270h1v2h-1zM32 272h1v2h-1zM56 272h1v2h-1zM32 274h1v2h-1zM40 274h1v2h-1zM32 276h1v2h-1zM46 276h1v2h-1zM0 280h1v2h-1z"/><path fill="#6A9955" d="M4 18h3v2h-3zM5 20h21v2h-21zM5 22h1v2h-1zM5 24h14v2h-14zM5 26h2v2h-2zM41 56h16v2h-16zM42 58h41v2h-41zM42 60h47v2h-47zM41 74h10v2h-10zM58 76h49v2h-49zM42 84h41v2h-41zM42 86h47v2h-47zM35 120h16v2h-16zM35 168h10v2h-10zM35 208h16v2h-16zM35 218h10v2h-10zM4 242h3v2h-3zM5 244h25v2h-25zM5 246h1v2h-1zM5 248h14v2h-14zM5 250h2v2h-2z"/><path fill="#DCDCAA" d="M20 28h2v2h-2zM22 32h6v2h-6zM23 34h6v2h-6zM17 36h6v2h-6zM12 40h5v2h-5zM22 42h10v2h-10zM22 46h5v2h-5zM22 48h10v2h-10zM16 54h6v2h-6zM20 56h13v2h-13zM20 58h6v2h-6zM20 60h6v2h-6zM20 62h10v2h-10zM20 66h6v2h-6zM16 72h6v2h-6zM20 74h13v2h-13zM26 76h6v2h-6zM24 78h18v2h-18zM78 78h8v2h-8zM24 80h5v2h-5zM20 84h6v2h-6zM20 86h6v2h-6zM20 88h10v2h-10zM26 90h6v2h-6zM24 92h6v2h-6zM24 96h6v2h-6zM16 104h6v2h-6zM20 106h18v2h-18zM20 110h6v2h-6zM20 112h18v2h-18zM20 114h5v2h-5zM20 118h7v2h-7zM18 120h10v2h-10zM18 122h2v2h-2zM18 124h8v2h-8zM24 128h18v2h-18zM24 130h5v2h-5zM24 134h7v2h-7zM24 140h7v2h-7zM16 152h6v2h-6zM20 154h18v2h-18zM20 158h6v2h-6zM20 160h18v2h-18zM20 162h5v2h-5zM20 166h7v2h-7zM18 168h10v2h-10zM18 170h2v2h-2zM18 172h8v2h-8zM24 176h18v2h-18zM24 178h5v2h-5zM24 182h7v2h-7zM24 188h7v2h-7zM16 198h6v2h-6zM20 200h18v2h-18zM20 202h18v2h-18zM20 206h7v2h-7zM18 208h10v2h-10zM18 210h2v2h-2zM18 212h8v2h-8zM20 216h7v2h-7zM18 218h10v2h-10zM18 220h2v2h-2zM18 222h8v2h-8zM20 226h7v2h-7zM8 232h3v2h-3zM14 234h5v2h-5zM20 234h6v2h-6zM68 234h6v2h-6zM14 236h6v2h-6zM21 236h6v2h-6zM20 252h4v2h-4zM22 256h6v2h-6zM12 260h5v2h-5zM22 262h10v2h-10zM16 268h4v2h-4zM16 270h4v2h-4zM16 272h4v2h-4zM16 274h4v2h-4zM16 276h4v2h-4z"/><path fill="#DA70D6" d="M22 28h1v2h-1zM23 28h1v2h-1zM4 30h1v2h-1zM40 46h1v2h-1zM59 46h1v2h-1zM33 56h1v2h-1zM38 56h1v2h-1zM26 58h1v2h-1zM33 58h1v2h-1zM26 60h1v2h-1zM39 60h1v2h-1zM30 62h1v2h-1zM31 62h1v2h-1zM26 66h1v2h-1zM49 66h1v2h-1zM33 74h1v2h-1zM38 74h1v2h-1zM15 76h1v2h-1zM54 76h1v2h-1zM56 76h1v2h-1zM12 82h1v2h-1zM26 84h1v2h-1zM33 84h1v2h-1zM26 86h1v2h-1zM39 86h1v2h-1zM30 88h1v2h-1zM31 88h1v2h-1zM15 90h1v2h-1zM54 90h1v2h-1zM56 90h1v2h-1zM44 92h1v2h-1zM63 92h1v2h-1zM12 94h1v2h-1zM19 94h1v2h-1zM12 98h1v2h-1zM38 106h1v2h-1zM76 106h1v2h-1zM26 110h1v2h-1zM39 110h1v2h-1zM38 112h1v2h-1zM70 112h1v2h-1zM25 114h1v2h-1zM27 118h1v2h-1zM65 118h1v2h-1zM28 120h1v2h-1zM33 120h1v2h-1zM20 122h1v2h-1zM47 122h1v2h-1zM26 124h1v2h-1zM36 124h1v2h-1zM15 126h1v2h-1zM22 126h1v2h-1zM24 126h1v2h-1zM45 134h1v2h-1zM64 134h1v2h-1zM12 138h1v2h-1zM19 138h1v2h-1zM84 140h1v2h-1zM102 140h1v2h-1zM12 144h1v2h-1zM38 154h1v2h-1zM70 154h1v2h-1zM26 158h1v2h-1zM39 158h1v2h-1zM38 160h1v2h-1zM70 160h1v2h-1zM25 162h1v2h-1zM27 166h1v2h-1zM59 166h1v2h-1zM28 168h1v2h-1zM33 168h1v2h-1zM20 170h1v2h-1zM41 170h1v2h-1zM26 172h1v2h-1zM36 172h1v2h-1zM15 174h1v2h-1zM22 174h1v2h-1zM24 174h1v2h-1zM45 182h1v2h-1zM64 182h1v2h-1zM12 186h1v2h-1zM19 186h1v2h-1zM78 188h1v2h-1zM96 188h1v2h-1zM12 192h1v2h-1zM38 200h1v2h-1zM76 200h1v2h-1zM38 202h1v2h-1zM70 202h1v2h-1zM27 206h1v2h-1zM65 206h1v2h-1zM28 208h1v2h-1zM33 208h1v2h-1zM20 210h1v2h-1zM47 210h1v2h-1zM26 212h1v2h-1zM36 212h1v2h-1zM27 216h1v2h-1zM59 216h1v2h-1zM28 218h1v2h-1zM33 218h1v2h-1zM20 220h1v2h-1zM41 220h1v2h-1zM26 222h1v2h-1zM36 222h1v2h-1zM27 226h1v2h-1zM4 238h1v2h-1zM24 252h1v2h-1zM25 252h1v2h-1zM4 254h1v2h-1zM4 278h1v2h-1z"/><path fill="#9CDCFE" d="M8 32h11v2h-11zM8 34h12v2h-12zM8 36h6v2h-6zM18 40h11v2h-11zM12 46h6v2h-6zM28 46h12v2h-12zM23 54h11v2h-11zM71 54h6v2h-6zM12 56h6v2h-6zM12 58h6v2h-6zM12 60h6v2h-6zM12 62h6v2h-6zM12 66h6v2h-6zM23 72h11v2h-11zM65 72h6v2h-6zM78 72h6v2h-6zM86 72h12v2h-12zM12 74h6v2h-6zM16 76h6v2h-6zM16 78h6v2h-6zM43 78h12v2h-12zM16 80h6v2h-6zM30 80h12v2h-12zM12 84h6v2h-6zM12 86h6v2h-6zM12 88h6v2h-6zM16 90h6v2h-6zM16 92h6v2h-6zM32 92h12v2h-12zM16 96h6v2h-6zM23 104h11v2h-11zM81 104h6v2h-6zM94 104h11v2h-11zM107 104h5v2h-5zM12 106h6v2h-6zM60 106h16v2h-16zM12 110h6v2h-6zM12 112h6v2h-6zM39 112h12v2h-12zM12 114h6v2h-6zM27 114h12v2h-12zM12 118h6v2h-6zM49 118h16v2h-16zM21 122h11v2h-11zM16 126h6v2h-6zM16 128h6v2h-6zM43 128h12v2h-12zM16 130h6v2h-6zM30 130h12v2h-12zM16 134h6v2h-6zM33 134h12v2h-12zM88 134h16v2h-16zM106 134h6v2h-6zM16 140h6v2h-6zM54 140h16v2h-16zM72 140h12v2h-12zM23 152h11v2h-11zM75 152h6v2h-6zM88 152h11v2h-11zM101 152h11v2h-11zM12 154h6v2h-6zM60 154h10v2h-10zM12 158h6v2h-6zM12 160h6v2h-6zM39 160h12v2h-12zM12 162h6v2h-6zM27 162h12v2h-12zM12 166h6v2h-6zM49 166h10v2h-10zM21 170h11v2h-11zM16 174h6v2h-6zM16 176h6v2h-6zM43 176h12v2h-12zM16 178h6v2h-6zM30 178h12v2h-12zM16 182h6v2h-6zM33 182h12v2h-12zM88 182h10v2h-10zM100 182h12v2h-12zM16 188h6v2h-6zM54 188h10v2h-10zM66 188h12v2h-12zM23 198h11v2h-11zM80 198h6v2h-6zM93 198h11v2h-11zM12 200h6v2h-6zM60 200h16v2h-16zM12 202h6v2h-6zM60 202h10v2h-10zM12 206h6v2h-6zM49 206h16v2h-16zM21 210h11v2h-11zM12 216h6v2h-6zM49 216h10v2h-10zM21 220h11v2h-11zM12 226h6v2h-6zM50 226h16v2h-16zM89 226h10v2h-10zM8 256h11v2h-11zM18 260h11v2h-11zM21 268h11v2h-11zM21 270h11v2h-11zM21 272h11v2h-11zM21 274h11v2h-11zM21 276h11v2h-11z"/><path fill="#179FFF" d="M28 32h1v2h-1zM53 32h1v2h-1zM29 34h1v2h-1zM55 34h1v2h-1zM23 36h1v2h-1zM42 36h1v2h-1zM11 40h1v2h-1zM30 40h1v2h-1zM32 40h1v2h-1zM8 44h1v2h-1zM11 46h1v2h-1zM69 46h1v2h-1zM71 46h1v2h-1zM8 50h1v2h-1zM22 54h1v2h-1zM27 66h1v2h-1zM48 66h1v2h-1zM9 68h1v2h-1zM22 72h1v2h-1zM32 76h1v2h-1zM53 76h1v2h-1zM42 78h1v2h-1zM75 78h1v2h-1zM86 78h1v2h-1zM87 78h1v2h-1zM29 80h1v2h-1zM94 80h1v2h-1zM32 90h1v2h-1zM53 90h1v2h-1zM30 92h1v2h-1zM87 92h1v2h-1zM30 96h1v2h-1zM53 96h1v2h-1zM9 100h1v2h-1zM22 104h1v2h-1zM51 112h1v2h-1zM69 112h1v2h-1zM26 114h1v2h-1zM72 114h1v2h-1zM32 122h1v2h-1zM46 122h1v2h-1zM42 128h1v2h-1zM75 128h1v2h-1zM29 130h1v2h-1zM110 130h1v2h-1zM31 134h1v2h-1zM73 136h1v2h-1zM31 140h1v2h-1zM73 142h1v2h-1zM9 148h1v2h-1zM22 152h1v2h-1zM51 160h1v2h-1zM69 160h1v2h-1zM26 162h1v2h-1zM72 162h1v2h-1zM32 170h1v2h-1zM40 170h1v2h-1zM42 176h1v2h-1zM75 176h1v2h-1zM29 178h1v2h-1zM104 178h1v2h-1zM31 182h1v2h-1zM61 184h1v2h-1zM31 188h1v2h-1zM61 190h1v2h-1zM9 194h1v2h-1zM22 198h1v2h-1zM32 210h1v2h-1zM46 210h1v2h-1zM32 220h1v2h-1zM40 220h1v2h-1zM28 226h1v2h-1zM99 226h1v2h-1zM9 228h1v2h-1zM11 232h1v2h-1zM19 232h1v2h-1zM19 234h1v2h-1zM107 234h1v2h-1zM20 236h1v2h-1zM51 236h1v2h-1zM28 256h1v2h-1zM53 256h1v2h-1zM11 260h1v2h-1zM30 260h1v2h-1zM32 260h1v2h-1zM8 264h1v2h-1zM20 268h1v2h-1zM56 268h1v2h-1zM20 270h1v2h-1zM51 270h1v2h-1zM20 272h1v2h-1zM57 272h1v2h-1zM20 274h1v2h-1zM41 274h1v2h-1zM20 276h1v2h-1zM47 276h1v2h-1z"/><path fill="#CE9178" d="M29 32h24v2h-24zM30 34h25v2h-25zM24 36h18v2h-18zM33 42h79v2h-79zM41 46h18v2h-18zM33 48h79v2h-79zM35 54h13v2h-13zM34 56h4v2h-4zM27 58h6v2h-6zM27 60h12v2h-12zM28 66h6v2h-6zM36 66h12v2h-12zM35 72h7v2h-7zM34 74h4v2h-4zM33 76h20v2h-20zM56 78h18v2h-18zM43 80h18v2h-18zM64 80h30v2h-30zM27 84h6v2h-6zM27 86h12v2h-12zM33 90h20v2h-20zM45 92h18v2h-18zM66 92h6v2h-6zM74 92h12v2h-12zM32 96h6v2h-6zM40 96h12v2h-12zM35 104h23v2h-23zM27 110h12v2h-12zM52 112h17v2h-17zM40 114h17v2h-17zM60 114h12v2h-12zM75 114h37v2h-37zM29 120h4v2h-4zM33 122h13v2h-13zM27 124h9v2h-9zM56 128h18v2h-18zM43 130h18v2h-18zM64 130h46v2h-46zM46 134h18v2h-18zM20 136h53v2h-53zM85 140h17v2h-17zM105 140h7v2h-7zM20 142h53v2h-53zM35 152h17v2h-17zM27 158h12v2h-12zM52 160h17v2h-17zM40 162h17v2h-17zM60 162h12v2h-12zM75 162h37v2h-37zM29 168h4v2h-4zM33 170h7v2h-7zM27 172h9v2h-9zM56 176h18v2h-18zM43 178h18v2h-18zM64 178h40v2h-40zM46 182h18v2h-18zM20 184h41v2h-41zM79 188h17v2h-17zM99 188h12v2h-12zM20 190h41v2h-41zM35 198h22v2h-22zM29 208h4v2h-4zM33 210h13v2h-13zM27 212h9v2h-9zM29 218h4v2h-4zM33 220h7v2h-7zM27 222h9v2h-9zM102 226h10v2h-10zM12 232h7v2h-7zM27 234h24v2h-24zM56 234h9v2h-9zM75 234h24v2h-24zM28 236h22v2h-22zM29 256h24v2h-24zM33 262h79v2h-79zM33 268h22v2h-22zM33 270h17v2h-17zM33 272h23v2h-23zM33 274h7v2h-7zM33 276h13v2h-13z"/><path fill="#C586C0" d="M8 40h2v2h-2zM12 42h5v2h-5zM8 46h2v2h-2zM12 48h5v2h-5zM12 76h2v2h-2zM12 90h2v2h-2zM14 94h4v2h-4zM12 126h2v2h-2zM14 138h4v2h-4zM12 174h2v2h-2zM14 186h4v2h-4zM8 260h2v2h-2zM12 262h5v2h-5z"/></g><rect x="0" y="0" width="112" height="300" fill="url(#stp)"/></svg>
<div class="a" style="left:1906px;top:92px;width:1px;height:934px;background:#2A2A2A"></div>
<div class="a" style="left:1907px;top:92px;width:13px;height:2px;background:#A0A0A0"></div>
<div class="a" style="left:1906px;top:329px;width:14px;height:240px;background:rgba(121,121,121,0.4)"></div>
<div class="a" style="left:0;top:1026px;width:1920px;height:22px;background:#181818;border-top:1px solid #2B2B2B"></div>
<div class="a" style="left:0;top:1027px;width:34px;height:21px;background:#0078D4"></div>
<svg class="ic" style="left:11px;top:1030px" width="14" height="14" viewBox="0 0 14 14"><path d="M2 12.5 L6 8.5 L2 4.5 M12 1.5 L8 5.5 L12 9.5" fill="none" stroke="#FFFFFF" stroke-width="1.1"/></svg>
<svg class="ic" style="left:42px;top:1030px" width="14" height="14" viewBox="0 0 14 14"><circle cx="7" cy="7" r="5.8" fill="none" stroke="#CCCCCC" stroke-width="1"/><path d="M4.7 4.7 L9.3 9.3 M9.3 4.7 L4.7 9.3" stroke="#CCCCCC" stroke-width="1"/></svg>
<div class="t" style="left:59.5px;top:1029px;font-size:12px;color:#CCCCCC;font-weight:normal;font-style:normal;">0</div>
<svg class="ic" style="left:70px;top:1030px" width="14" height="14" viewBox="0 0 14 14"><path d="M7 1.5 L12.8 12.5 H1.2 Z" fill="none" stroke="#CCCCCC" stroke-width="1"/><path d="M7 5.5 V9.5" stroke="#CCCCCC" stroke-width="1"/></svg>
<div class="t" style="left:87.5px;top:1029px;font-size:12px;color:#CCCCCC;font-weight:normal;font-style:normal;">0</div>
<div class="t" style="left:1539.1px;top:1029px;font-size:12px;color:#CCCCCC;font-weight:normal;font-style:normal;letter-spacing:0.346px;">Ln 1, Col 1</div>
<div class="t" style="left:1617.7px;top:1029px;font-size:12px;color:#CCCCCC;font-weight:normal;font-style:normal;letter-spacing:0.204px;">Spaces: 4</div>
<div class="t" style="left:1689.5px;top:1029px;font-size:12px;color:#CCCCCC;font-weight:normal;font-style:normal;letter-spacing:1.176px;">UTF-8</div>
<div class="t" style="left:1745.0px;top:1029px;font-size:12px;color:#CCCCCC;font-weight:normal;font-style:normal;letter-spacing:-1.004px;">LF</div>
<div class="t" style="left:1774.8px;top:1029px;font-size:12px;color:#CCCCCC;font-weight:normal;font-style:normal;letter-spacing:-0.387px;">PHP</div>
<div class="t" style="left:1832.3px;top:1029px;font-size:12px;color:#CCCCCC;font-weight:normal;font-style:normal;letter-spacing:0.141px;">Go Live</div>
<svg class="ic" style="left:1815px;top:1030px" width="14" height="14" viewBox="0 0 14 14"><circle cx="7.8" cy="6.6" r="1.5" fill="#CCCCCC"/><path d="M5.5 8.9 A3.2 3.2 0 1 1 10.1 8.9 M3.9 10.3 A5.2 5.2 0 1 1 11.7 10.3" fill="none" stroke="#CCCCCC" stroke-width="1"/><path d="M7.8 7.5 V13.2" stroke="#CCCCCC" stroke-width="1.6"/></svg>
<svg class="ic" style="left:1891px;top:1030px" width="14" height="14" viewBox="0 0 14 14"><path d="M3 10.5 V6.5 A4 4 0 0 1 11 6.5 V10.5 L12 11.5 H2 Z M5.5 12.5 A1.5 1.5 0 0 0 8.5 12.5" fill="none" stroke="#CCCCCC" stroke-width="1"/></svg>
</body></html>
